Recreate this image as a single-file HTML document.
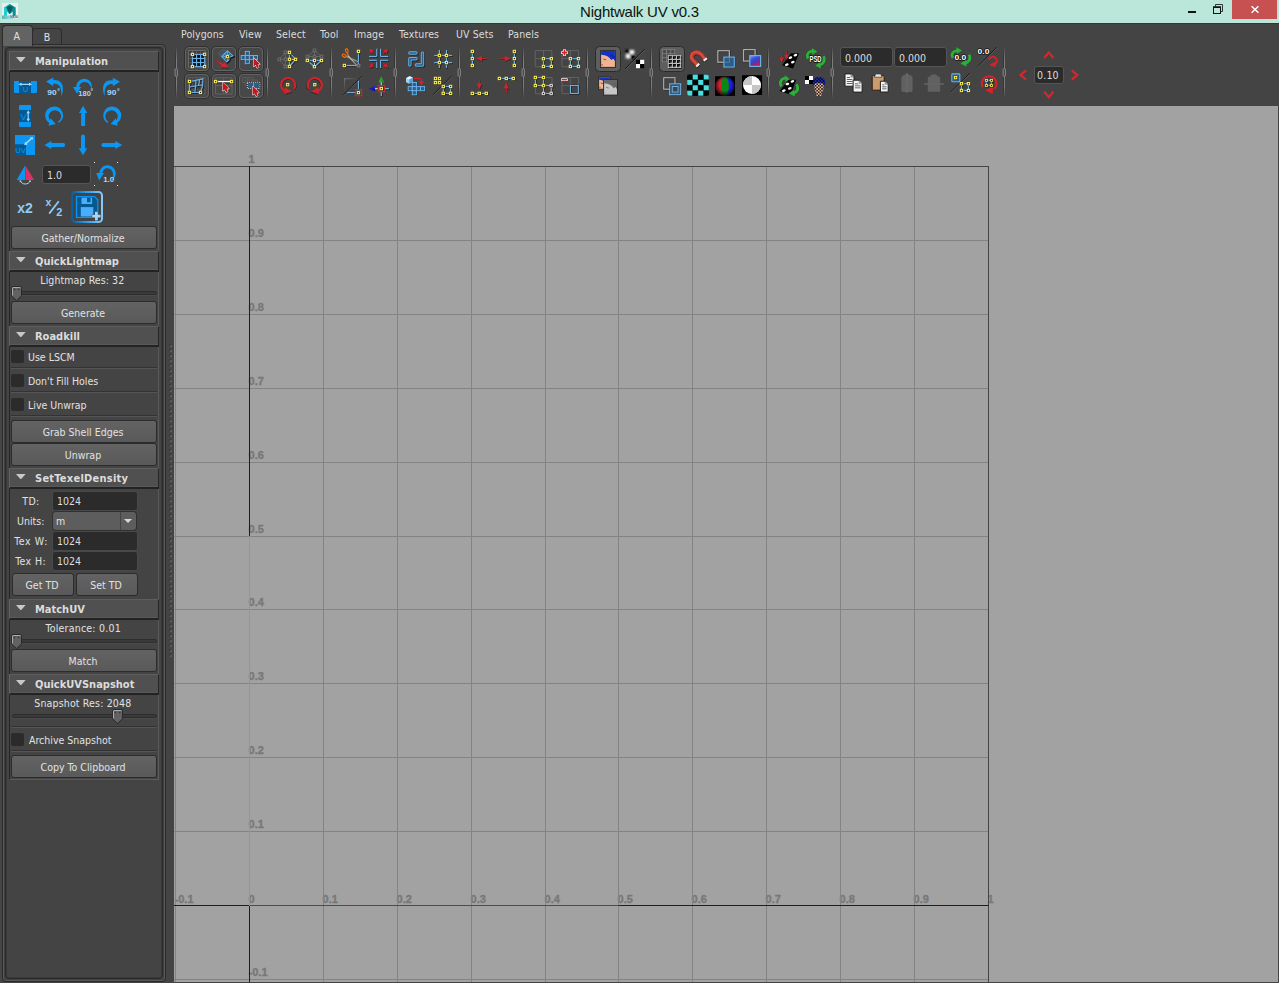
<!DOCTYPE html><html><head><meta charset="utf-8"><title>Nightwalk UV v0.3</title><style>
*{box-sizing:border-box;margin:0;padding:0}
html,body{width:1279px;height:983px;overflow:hidden;background:#444;}
body{position:relative;font-family:"DejaVu Sans Condensed","Liberation Sans",sans-serif;font-size:10.5px;color:#d8d8d8;}
.abs{position:absolute}
#title{position:absolute;left:0;top:0;width:1279px;height:23px;background:#bae7d9;}
#title .t{position:absolute;left:0;width:1279px;top:3px;text-align:center;font-family:'Liberation Sans',sans-serif;font-size:15px;color:#101010;line-height:18px;letter-spacing:-0.22px}
#close{position:absolute;left:1232px;top:0;width:45px;height:19px;background:#c75050}
.hdr{position:absolute;left:9px;width:150px;height:21px;background:#505050;border-top:1px solid #5e5e5e;border-left:1px solid #636363;border-right:1px solid #262626;border-bottom:2px solid #232323;box-shadow:inset 0 -1px 0 #595959}
.hdr b{position:absolute;left:25px;top:3px;font-family:"DejaVu Sans Condensed","Liberation Sans",sans-serif;font-weight:bold;font-size:11px;line-height:13px;color:#dcdcdc;white-space:nowrap}
.hdr i{position:absolute;left:6px;top:5px;width:9.6px;height:5.4px;background:#c8c8c8;clip-path:polygon(0 0,100% 0,50% 100%)}
.btn{position:absolute;height:21px;background:linear-gradient(#636363,#595959);border-radius:2.5px;box-shadow:0 0 0 1px #2c2c2c;text-align:center;line-height:21px;color:#e2e2e2;white-space:nowrap;padding:1px 2px 0 0}
.fld{position:absolute;background:#2b2b2b;border-radius:3px;border:1px solid #555;color:#dedede;white-space:nowrap}
.lbl{position:absolute;white-space:nowrap;color:#e2e2e2;line-height:13px}
.cb{position:absolute;left:11px;width:13px;height:13px;background:#2b2b2b;border-radius:2px}
.sep{position:absolute;left:11px;width:146px;height:2px;border-top:1px solid #333;border-bottom:1px solid #555}
.groove{position:absolute;left:12px;width:145px;height:4px;background:#3a3a3a;border:1px solid #2d2d2d;border-radius:2px;box-shadow:0 1px 0 #4b4b4b}
.knob{position:absolute;width:11px;height:15px}
.menu span{position:absolute;top:27px;line-height:14px;color:#dcdcdc;white-space:nowrap;letter-spacing:0.1px}
.tsep{position:absolute;top:47px;width:3px;height:51px}
.tbtn{position:absolute;width:24px;height:24px;border-radius:4px;background:#494949;box-shadow:0 0 0 1px #3a3a3a, inset 0 0 0 1px #555}
.tbtn.on{background:#5e5e5e;box-shadow:0 0 0 1px #3a3a3a}
svg{position:absolute;overflow:visible}
.gl{position:absolute;font-family:'Liberation Sans',sans-serif;font-weight:bold;font-size:10px;color:#7c7c7c;line-height:10px;white-space:nowrap}
</style></head><body><div id="title"><div class="t">Nightwalk UV v0.3</div><svg style="left:2px;top:3px" width="16" height="16" viewBox="0 0 16 16">
<defs><linearGradient id="mg" x1="0" y1="0" x2="1" y2="1"><stop offset="0" stop-color="#dfeeee"/><stop offset="1" stop-color="#f4f4f8"/></linearGradient>
<linearGradient id="mg2" x1="0" y1="0" x2="1" y2="0"><stop offset="0" stop-color="#4fb8bc"/><stop offset="1" stop-color="#e8f0f2"/></linearGradient></defs>
<rect width="16" height="16" fill="url(#mg)"/>
<rect y="12.5" width="16" height="3.5" fill="url(#mg2)"/>
<path d="M2 12.5V4.5L7.5 1L13.5 4.5V12.5H10.8V8.3L7.6 11.2L4.8 8.3V12.5Z" fill="#12b5b5"/>
<path d="M7.5 1L13.5 4.5V12.5H10.8V8.3L7.6 11.2Z" fill="#0c8f90"/>
<path d="M4.2 4.2L7.6 2.6L11.2 4.2L7.6 11Z" fill="#075f62"/>
<path d="M2 12.5V4.5L4.2 4.2L4.8 8.3V12.5Z" fill="#1ccfd0"/>
<text x="8.2" y="15.4" font-family="Liberation Sans,sans-serif" font-weight="bold" font-size="2.9" fill="#445" opacity="0.75">MAYA</text>
</svg><div class="abs" style="left:1188px;top:11px;width:8px;height:2px;background:#111"></div><svg style="left:1213px;top:4px" width="11" height="10" viewBox="0 0 11 10">
<path d="M2.5 2.5V0.5H9.5V7.5H8" fill="none" stroke="#333" stroke-width="1"/>
<rect x="0.5" y="3" width="7" height="6.5" fill="none" stroke="#111" stroke-width="1"/><rect x="0" y="2.5" width="8" height="1.5" fill="#111"/></svg><div id="close"><svg style="left:19px;top:6px" width="8" height="7" viewBox="0 0 8 7"><path d="M0.6 0.3L7.4 6.7M7.4 0.3L0.6 6.7" stroke="#fff" stroke-width="1.5"/></svg></div></div><div class="abs" style="left:0;top:23px;width:1279px;height:1px;background:#363636"></div><div class="abs" style="left:0;top:24px;width:2px;height:959px;background:#464646"></div><div class="abs" style="left:2px;top:44px;width:164px;height:938px;border:1px solid #2c2c2c;border-radius:4px;box-shadow:inset 0 0 0 1px #575757;background:#444"></div><div class="abs" style="left:5px;top:47px;width:158px;height:932px;border:1px solid #2a2a2a;border-radius:4px;box-shadow:0 0 0 1px #414141,inset 0 0 0 1px #393939;background:#444"></div><div class="abs" style="left:32px;top:28px;width:30px;height:16px;border:1px solid #2c2c2c;border-bottom:none;border-radius:4px 4px 0 0;background:#444"></div><div class="abs" style="left:2px;top:25px;width:31px;height:21px;border:1px solid #2c2c2c;border-bottom:none;border-radius:4px 4px 0 0;background:#636363"></div><div class="abs" style="left:3px;top:44px;width:29px;height:2px;background:#636363"></div><div class="lbl" style="left:13.6px;top:30px;">A</div><div class="lbl" style="left:43.8px;top:31px;">B</div><div class="abs" style="left:9px;top:51px;width:150px;height:729px;border-left:1px solid #262626;border-right:1px solid #5a5a5a;border-bottom:1px solid #5a5a5a"></div><div class="hdr" style="top:51px"><i></i><b style="">Manipulation</b></div><div class="hdr" style="top:251px"><i></i><b style="">QuickLightmap</b></div><div class="hdr" style="top:326px"><i></i><b style="">Roadkill</b></div><div class="hdr" style="top:468px"><i></i><b style="letter-spacing:0.25px">SetTexelDensity</b></div><div class="hdr" style="top:599px"><i></i><b style="">MatchUV</b></div><div class="hdr" style="top:674px"><i></i><b style="">QuickUVSnapshot</b></div><div class="fld" style="left:42px;top:165px;width:49px;height:19px;line-height:18px;padding-left:4px;">1.0</div><div class="btn" style="left:12px;top:227px;width:144px;height:21px;line-height:20px">Gather/Normalize</div><div class="lbl" style="left:7.3px;width:150px;text-align:center;top:274px;letter-spacing:0.09px">Lightmap Res: 32</div><div class="groove" style="top:291px"></div><svg class="knob" style="left:11px;top:286px" width="11" height="15" viewBox="0 0 11 15"><path d="M2 0.5H9Q10.5 0.5 10.5 2V9.8L5.5 14.6L0.5 9.8V2Q0.5 0.5 2 0.5Z" fill="#626262" stroke="#2a2a2a" stroke-width="1"/><path d="M1.5 9.4V2.2Q1.5 1.5 2.2 1.5H8.8Q9.5 1.5 9.5 2.2" fill="none" stroke="#b4b4b4" stroke-width="1" opacity="0.9"/><rect x="2.6" y="2.8" width="1.6" height="1.4" fill="#3a3a3a"/><rect x="6.9" y="2.8" width="1.6" height="1.4" fill="#3a3a3a"/></svg><div class="btn" style="left:12px;top:302px;width:144px;height:21px;line-height:20px">Generate</div><div class="cb" style="top:350px"></div><div class="lbl" style="left:28px;top:351px;">Use LSCM</div><div class="sep" style="top:367px"></div><div class="cb" style="top:374px"></div><div class="lbl" style="left:28px;top:375px;">Don't Fill Holes</div><div class="sep" style="top:391px"></div><div class="cb" style="top:398px"></div><div class="lbl" style="left:28px;top:399px;">Live Unwrap</div><div class="sep" style="top:415px"></div><div class="btn" style="left:12px;top:421px;width:144px;height:21px;line-height:20px">Grab Shell Edges</div><div class="btn" style="left:12px;top:444px;width:144px;height:21px;line-height:20px">Unwrap</div><div class="lbl" style="left:22.3px;top:495px;letter-spacing:0.35px">TD:</div><div class="fld" style="left:52px;top:491px;width:86px;height:20px;line-height:19px;padding-left:4px;border-color:#494949">1024</div><div class="lbl" style="left:17px;top:515px;">Units:</div><div class="abs" style="left:53px;top:512px;width:83px;height:18px;background:#5d5d5d;border-radius:3px;box-shadow:0 0 0 1px #303030"><span class="lbl" style="left:3px;top:3px">m</span><div class="abs" style="left:67px;top:0;width:1px;height:18px;background:#444"></div><div class="abs" style="left:71px;top:7px;border-left:4px solid transparent;border-right:4px solid transparent;border-top:4px solid #d8d8d8"></div></div><div class="lbl" style="left:14.2px;top:535px;letter-spacing:0.62px">Tex W:</div><div class="fld" style="left:52px;top:531px;width:86px;height:20px;line-height:19px;padding-left:4px;border-color:#494949">1024</div><div class="lbl" style="left:15.2px;top:555px;letter-spacing:0.4px">Tex H:</div><div class="fld" style="left:52px;top:551px;width:86px;height:20px;line-height:19px;padding-left:4px;border-color:#494949">1024</div><div class="btn" style="left:13px;top:574px;width:60px;height:21px;line-height:20px">Get TD</div><div class="btn" style="left:77px;top:574px;width:60px;height:21px;line-height:20px">Set TD</div><div class="lbl" style="left:8.2px;width:150px;text-align:center;top:622px;letter-spacing:0.22px">Tolerance: 0.01</div><div class="groove" style="top:639px"></div><svg class="knob" style="left:11px;top:634px" width="11" height="15" viewBox="0 0 11 15"><path d="M2 0.5H9Q10.5 0.5 10.5 2V9.8L5.5 14.6L0.5 9.8V2Q0.5 0.5 2 0.5Z" fill="#626262" stroke="#2a2a2a" stroke-width="1"/><path d="M1.5 9.4V2.2Q1.5 1.5 2.2 1.5H8.8Q9.5 1.5 9.5 2.2" fill="none" stroke="#b4b4b4" stroke-width="1" opacity="0.9"/><rect x="2.6" y="2.8" width="1.6" height="1.4" fill="#3a3a3a"/><rect x="6.9" y="2.8" width="1.6" height="1.4" fill="#3a3a3a"/></svg><div class="btn" style="left:12px;top:650px;width:144px;height:21px;line-height:20px">Match</div><div class="lbl" style="left:7.8px;width:150px;text-align:center;top:697px;letter-spacing:0.16px">Snapshot Res: 2048</div><div class="groove" style="top:714px"></div><svg class="knob" style="left:112px;top:709px" width="11" height="15" viewBox="0 0 11 15"><path d="M2 0.5H9Q10.5 0.5 10.5 2V9.8L5.5 14.6L0.5 9.8V2Q0.5 0.5 2 0.5Z" fill="#626262" stroke="#2a2a2a" stroke-width="1"/><path d="M1.5 9.4V2.2Q1.5 1.5 2.2 1.5H8.8Q9.5 1.5 9.5 2.2" fill="none" stroke="#b4b4b4" stroke-width="1" opacity="0.9"/><rect x="2.6" y="2.8" width="1.6" height="1.4" fill="#3a3a3a"/><rect x="6.9" y="2.8" width="1.6" height="1.4" fill="#3a3a3a"/></svg><div class="sep" style="top:726px"></div><div class="cb" style="top:733px"></div><div class="lbl" style="left:29px;top:734px;">Archive Snapshot</div><div class="sep" style="top:750px"></div><div class="btn" style="left:12px;top:756px;width:144px;height:21px;line-height:20px">Copy To Clipboard</div><svg style="left:0;top:0" width="170" height="260" viewBox="0 0 170 260"><rect x="14" y="81" width="23" height="12" rx="1" fill="#0b96f2"/><rect x="19" y="81" width="12" height="12" fill="#045a90"/><path d="M18.5 84.3L21.5 82.6V83.8H29V82.6L32 84.3L29 86V84.9H21.5V86Z" fill="#a6d6fa"/><text x="25.5" y="92" text-anchor="middle" font-family="Liberation Sans,sans-serif" font-size="7.5" fill="#0b96f2">U</text><path d="M46 81.5L53.3 77.6V80.2C59 79.5 63 83 63 88.5C63 91.5 62.3 94 61.2 96.2C61.6 92 61.2 88 59 85.6C57.5 84 55.5 83.6 53.3 83.8V86.2Z" fill="#0b96f2"/><text x="47.3" y="95.4" font-family="Liberation Sans,sans-serif" font-size="7.6" font-weight="bold" fill="#a6d6fa" textLength="9.4" lengthAdjust="spacingAndGlyphs">90</text><text x="57.2" y="94.2" font-family="Liberation Sans,sans-serif" font-size="6.5" font-weight="bold" fill="#a6d6fa">°</text><path d="M73 87H76.3C76.2 82.5 79.8 78.8 84.3 78.8C89 78.8 92.2 82.6 91.9 87.5C91.8 88.6 91.7 89.2 91.5 89.8C91 85.5 88.5 82 84.5 82C81.5 82 79.4 84.2 79.3 87H81.2L77 93.8Z" fill="#0b96f2"/><text x="78.3" y="96" font-family="Liberation Sans,sans-serif" font-size="7.6" font-weight="bold" fill="#a6d6fa" textLength="12.6" lengthAdjust="spacingAndGlyphs">180</text><text x="90.6" y="93.6" font-family="Liberation Sans,sans-serif" font-size="6.5" font-weight="bold" fill="#a6d6fa">°</text><path d="M120 81.7L112.8 77.8V80.4C107 79.5 103 83 103 88.5C103 91.5 103.7 94 104.8 96.2C104.4 92 104.8 88 107 85.7C108.5 84.2 110.5 83.8 112.8 84V86.3Z" fill="#0b96f2"/><text x="107" y="95.4" font-family="Liberation Sans,sans-serif" font-size="7.6" font-weight="bold" fill="#a6d6fa" textLength="9.4" lengthAdjust="spacingAndGlyphs">90</text><text x="116.9" y="94.2" font-family="Liberation Sans,sans-serif" font-size="6.5" font-weight="bold" fill="#a6d6fa">°</text><rect x="19" y="105" width="12" height="22" rx="1" fill="#0b96f2"/><rect x="19" y="110" width="12" height="12" fill="#045a90"/><text x="23.4" y="120.3" text-anchor="middle" font-family="Liberation Sans,sans-serif" font-size="9" fill="#0b96f2">V</text><path d="M28.2 110.2L30 113.2H28.8V118.8H30L28.2 121.8L26.4 118.8H27.6V113.2H26.4Z" fill="#a6d6fa"/><path d="M49.04 122.77A9 9 0 1 1 58.97 123.03L58.00 121.77A6.2 6.2 0 1 0 51.34 121.48ZM50.6 118.30000000000001L55.800000000000004 123.9L48.5 125.7Z" fill="#0b96f2"/><path d="M83.1 105.8L87.3 113.0H85.1V126.1H81.1V113.0H78.89999999999999Z" fill="#0b96f2"/><g transform="translate(224.4,0) scale(-1,1)"><path d="M107.04 122.77A9 9 0 1 1 116.97 123.03L116.00 121.77A6.2 6.2 0 1 0 109.34 121.48ZM108.60000000000001 118.30000000000001L113.8 123.9L106.5 125.7Z" fill="#0b96f2"/></g><rect x="15" y="135" width="20" height="20" fill="#0b96f2"/><rect x="15" y="144.3" width="11" height="10.7" fill="#045a90"/><text x="15.3" y="152.6" font-family="Liberation Sans,sans-serif" font-size="7.4" fill="#0b96f2" textLength="10.4" lengthAdjust="spacingAndGlyphs">UV</text><path d="M24.2 145.3L25 141.8L25.8 142.6L30.6 138.2L29.8 137.4L33.1 136.9L32.5 140.2L31.7 139.3L26.9 143.7L27.7 144.6Z" fill="#a6d6fa"/><path d="M44.4 145L51.4 141V143H63.099999999999994A2 2 0 0 1 63.099999999999994 147H51.4V149Z" fill="#0b96f2"/><path d="M83 155.3L87.2 148.3H85V136.4A2 2 0 0 0 81 136.4V148.3H78.8Z" fill="#0b96f2"/><path d="M122.3 145L115.3 141V143H103.4A2 2 0 0 0 103.4 147H115.3V149Z" fill="#0b96f2"/><path d="M16.6 179.9L25 165.6V179.9Z" fill="#0b96f2"/><path d="M25.4 165.6L34.2 179.9H25.4Z" fill="#dc3263"/><path d="M20.4 180.8C21 183 23 184 25.2 184C27.6 184 29.4 183 30 180.8" fill="none" stroke="#a6d6fa" stroke-width="1"/><path d="M19.6 180.4h1.6v1.6h-1.6zM29.2 180.4h1.6v1.6h-1.6z" fill="#a6d6fa"/><rect x="94" y="162" width="1" height="1" fill="#e6e6e6"/><rect x="117" y="162" width="1" height="1" fill="#e6e6e6"/><rect x="94" y="185" width="1" height="1" fill="#e6e6e6"/><rect x="117" y="185" width="1" height="1" fill="#e6e6e6"/><path d="M96.2 173H99.4C99.6 168.6 103.2 165.2 107.6 165.2C112.2 165.2 115.7 168.9 115.7 173.4C115.7 176.5 114 179.4 111.5 180.8C112.5 179 113 176.8 113 174.5C113 171 110.8 168.2 107.5 168.2C104.8 168.2 102.6 170.3 102.4 173H104L99.2 180.6Z" fill="#0b96f2"/><text x="103.2" y="182.3" font-family="Liberation Sans,sans-serif" font-size="7.2" font-weight="bold" fill="#a6d6fa" textLength="11" lengthAdjust="spacingAndGlyphs">1.0</text><text x="17.3" y="212.6" font-family="Liberation Sans,sans-serif" font-size="14" font-weight="bold" fill="#8ecbf9" textLength="15.6" lengthAdjust="spacingAndGlyphs">x2</text><text x="45.6" y="205.6" font-family="Liberation Sans,sans-serif" font-size="10.5" font-weight="bold" fill="#8ecbf9">x</text><path d="M49.2 213.6L58.8 201.2" stroke="#8ecbf9" stroke-width="1.8"/><text x="56.3" y="216.1" font-family="Liberation Sans,sans-serif" font-size="11" font-weight="bold" fill="#8ecbf9">2</text><defs><linearGradient id="sg" x1="0" y1="0" x2="1" y2="0"><stop offset="0" stop-color="#05609e"/><stop offset="0.45" stop-color="#2a98ee"/><stop offset="1" stop-color="#86c8ff"/></linearGradient></defs><rect x="72" y="192" width="30" height="30" rx="3.5" fill="none" stroke="url(#sg)" stroke-width="2"/><path d="M76.5 196.5H94.5L97.8 199.8V217.5H76.5Z" fill="#045a90" stroke="#0b96f2" stroke-width="1.2"/><rect x="81.5" y="197.6" width="10.6" height="6.4" fill="#4aaefc"/><rect x="87" y="197.6" width="3.5" height="4.6" fill="#045a90"/><rect x="80.8" y="207.1" width="12.5" height="9.4" fill="#4aaefc"/><path d="M95 211.8H97.8V214.7H100.6V217.5H97.8V220.4H95V217.5H92.2V214.7H95Z" fill="#a0d4ff" stroke="#3a3a3a" stroke-width="0.8" paint-order="stroke"/></svg><div class="menu"><span style="left:181px">Polygons</span><span style="left:239px">View</span><span style="left:276px">Select</span><span style="left:320px">Tool</span><span style="left:354px">Image</span><span style="left:399px">Textures</span><span style="left:456px">UV Sets</span><span style="left:508px">Panels</span></div><svg style="left:170px;top:44px" width="930" height="60" viewBox="170 44 930 60"><defs><linearGradient id="sepl" x1="0" y1="0" x2="0" y2="1"><stop offset="0" stop-color="#777" stop-opacity="0.1"/><stop offset="0.25" stop-color="#7c7c7c"/><stop offset="0.75" stop-color="#7c7c7c"/><stop offset="1" stop-color="#777" stop-opacity="0.1"/></linearGradient><linearGradient id="sepd" x1="0" y1="0" x2="0" y2="1"><stop offset="0" stop-color="#333" stop-opacity="0.1"/><stop offset="0.25" stop-color="#353535"/><stop offset="0.75" stop-color="#353535"/><stop offset="1" stop-color="#333" stop-opacity="0.1"/></linearGradient></defs><rect x="175" y="47" width="1" height="51" fill="url(#sepd)"/><rect x="176" y="47" width="1" height="51" fill="url(#sepl)"/><rect x="175.1" y="68.5" width="2.3" height="8" rx="1.15" fill="#444" stroke="#9c9c9c" stroke-width="0.8"/><rect x="266" y="47" width="1" height="51" fill="url(#sepd)"/><rect x="267" y="47" width="1" height="51" fill="url(#sepl)"/><rect x="266.1" y="68.5" width="2.3" height="8" rx="1.15" fill="#444" stroke="#9c9c9c" stroke-width="0.8"/><rect x="330" y="47" width="1" height="51" fill="url(#sepd)"/><rect x="331" y="47" width="1" height="51" fill="url(#sepl)"/><rect x="330.1" y="68.5" width="2.3" height="8" rx="1.15" fill="#444" stroke="#9c9c9c" stroke-width="0.8"/><rect x="394" y="47" width="1" height="51" fill="url(#sepd)"/><rect x="395" y="47" width="1" height="51" fill="url(#sepl)"/><rect x="394.1" y="68.5" width="2.3" height="8" rx="1.15" fill="#444" stroke="#9c9c9c" stroke-width="0.8"/><rect x="458" y="47" width="1" height="51" fill="url(#sepd)"/><rect x="459" y="47" width="1" height="51" fill="url(#sepl)"/><rect x="458.1" y="68.5" width="2.3" height="8" rx="1.15" fill="#444" stroke="#9c9c9c" stroke-width="0.8"/><rect x="522" y="47" width="1" height="51" fill="url(#sepd)"/><rect x="523" y="47" width="1" height="51" fill="url(#sepl)"/><rect x="522.1" y="68.5" width="2.3" height="8" rx="1.15" fill="#444" stroke="#9c9c9c" stroke-width="0.8"/><rect x="586" y="47" width="1" height="51" fill="url(#sepd)"/><rect x="587" y="47" width="1" height="51" fill="url(#sepl)"/><rect x="586.1" y="68.5" width="2.3" height="8" rx="1.15" fill="#444" stroke="#9c9c9c" stroke-width="0.8"/><rect x="650" y="47" width="1" height="51" fill="url(#sepd)"/><rect x="651" y="47" width="1" height="51" fill="url(#sepl)"/><rect x="650.1" y="68.5" width="2.3" height="8" rx="1.15" fill="#444" stroke="#9c9c9c" stroke-width="0.8"/><rect x="767" y="47" width="1" height="51" fill="url(#sepd)"/><rect x="768" y="47" width="1" height="51" fill="url(#sepl)"/><rect x="767.1" y="68.5" width="2.3" height="8" rx="1.15" fill="#444" stroke="#9c9c9c" stroke-width="0.8"/><rect x="831" y="47" width="1" height="51" fill="url(#sepd)"/><rect x="832" y="47" width="1" height="51" fill="url(#sepl)"/><rect x="831.1" y="68.5" width="2.3" height="8" rx="1.15" fill="#444" stroke="#9c9c9c" stroke-width="0.8"/><rect x="1003" y="47" width="1" height="51" fill="url(#sepd)"/><rect x="1004" y="47" width="1" height="51" fill="url(#sepl)"/><rect x="1003.1" y="68.5" width="2.3" height="8" rx="1.15" fill="#444" stroke="#9c9c9c" stroke-width="0.8"/><rect x="184.5" y="46.5" width="25" height="25" rx="4.5" fill="#484848" stroke="#303030" stroke-width="1"/><rect x="185.5" y="47.5" width="23" height="23" rx="3.5" fill="none" stroke="#626262" stroke-width="1"/><rect x="184.5" y="73.5" width="25" height="25" rx="4.5" fill="#484848" stroke="#303030" stroke-width="1"/><rect x="185.5" y="74.5" width="23" height="23" rx="3.5" fill="none" stroke="#626262" stroke-width="1"/><rect x="211.5" y="46.5" width="25" height="25" rx="4.5" fill="#484848" stroke="#303030" stroke-width="1"/><rect x="212.5" y="47.5" width="23" height="23" rx="3.5" fill="none" stroke="#626262" stroke-width="1"/><rect x="211.5" y="73.5" width="25" height="25" rx="4.5" fill="#484848" stroke="#303030" stroke-width="1"/><rect x="212.5" y="74.5" width="23" height="23" rx="3.5" fill="none" stroke="#626262" stroke-width="1"/><rect x="238.5" y="46.5" width="25" height="25" rx="4.5" fill="#484848" stroke="#303030" stroke-width="1"/><rect x="239.5" y="47.5" width="23" height="23" rx="3.5" fill="none" stroke="#626262" stroke-width="1"/><rect x="238.5" y="73.5" width="25" height="25" rx="4.5" fill="#484848" stroke="#303030" stroke-width="1"/><rect x="239.5" y="74.5" width="23" height="23" rx="3.5" fill="none" stroke="#626262" stroke-width="1"/><rect x="188.0" y="50" width="1" height="17.4" fill="#686868"/><rect x="188" y="50.0" width="17.4" height="1" fill="#686868"/><rect x="192.1" y="50" width="1" height="17.4" fill="#686868"/><rect x="188" y="54.1" width="17.4" height="1" fill="#686868"/><rect x="196.2" y="50" width="1" height="17.4" fill="#686868"/><rect x="188" y="58.2" width="17.4" height="1" fill="#686868"/><rect x="200.3" y="50" width="1" height="17.4" fill="#686868"/><rect x="188" y="62.3" width="17.4" height="1" fill="#686868"/><rect x="204.4" y="50" width="1" height="17.4" fill="#686868"/><rect x="188" y="66.4" width="17.4" height="1" fill="#686868"/><rect x="189.0" y="51.0" width="3.1" height="3.1" fill="#3a3a3a"/><rect x="189.0" y="55.1" width="3.1" height="3.1" fill="#3a3a3a"/><rect x="189.0" y="59.2" width="3.1" height="3.1" fill="#3a3a3a"/><rect x="189.0" y="63.3" width="3.1" height="3.1" fill="#3a3a3a"/><rect x="193.1" y="51.0" width="3.1" height="3.1" fill="#3a3a3a"/><rect x="193.1" y="55.1" width="3.1" height="3.1" fill="#3a3a3a"/><rect x="193.1" y="59.2" width="3.1" height="3.1" fill="#3a3a3a"/><rect x="193.1" y="63.3" width="3.1" height="3.1" fill="#3a3a3a"/><rect x="197.2" y="51.0" width="3.1" height="3.1" fill="#3a3a3a"/><rect x="197.2" y="55.1" width="3.1" height="3.1" fill="#3a3a3a"/><rect x="197.2" y="59.2" width="3.1" height="3.1" fill="#3a3a3a"/><rect x="197.2" y="63.3" width="3.1" height="3.1" fill="#3a3a3a"/><rect x="201.3" y="51.0" width="3.1" height="3.1" fill="#3a3a3a"/><rect x="201.3" y="55.1" width="3.1" height="3.1" fill="#3a3a3a"/><rect x="201.3" y="59.2" width="3.1" height="3.1" fill="#3a3a3a"/><rect x="201.3" y="63.3" width="3.1" height="3.1" fill="#3a3a3a"/><rect x="192.5" y="54.4" width="12.2" height="12.2" fill="#111"/><rect x="191.90" y="54.4" width="1.15" height="12.2" fill="#6bb0e4"/><rect x="192.5" y="53.80" width="12.2" height="1.15" fill="#6bb0e4"/><rect x="195.97" y="54.4" width="1.15" height="12.2" fill="#6bb0e4"/><rect x="192.5" y="57.87" width="12.2" height="1.15" fill="#6bb0e4"/><rect x="200.04" y="54.4" width="1.15" height="12.2" fill="#6bb0e4"/><rect x="192.5" y="61.94" width="12.2" height="1.15" fill="#6bb0e4"/><rect x="204.11" y="54.4" width="1.15" height="12.2" fill="#6bb0e4"/><rect x="192.5" y="66.01" width="12.2" height="1.15" fill="#6bb0e4"/><rect x="191.20" y="53.10" width="3.6" height="3.6" fill="#1a1a1a" opacity="0.8"/><rect x="190.80" y="52.70" width="3.4" height="3.4" fill="#f4e850"/><rect x="191.95" y="53.85" width="1.1" height="1.1" fill="#1a1a1a"/><rect x="203.30" y="53.10" width="3.6" height="3.6" fill="#1a1a1a" opacity="0.8"/><rect x="202.90" y="52.70" width="3.4" height="3.4" fill="#f4e850"/><rect x="204.05" y="53.85" width="1.1" height="1.1" fill="#1a1a1a"/><rect x="191.20" y="65.30" width="3.6" height="3.6" fill="#1a1a1a" opacity="0.8"/><rect x="190.80" y="64.90" width="3.4" height="3.4" fill="#f4e850"/><rect x="191.95" y="66.05" width="1.1" height="1.1" fill="#1a1a1a"/><rect x="203.30" y="65.30" width="3.6" height="3.6" fill="#1a1a1a" opacity="0.8"/><rect x="202.90" y="64.90" width="3.4" height="3.4" fill="#f4e850"/><rect x="204.05" y="66.05" width="1.1" height="1.1" fill="#1a1a1a"/><path d="M218.3 53.6L223 49.4L226 50.6M219.8 55L224.6 50.4M221 56.2L225.8 51.4M218.3 53.6L221.4 56.8" fill="none" stroke="#3f6688" stroke-width="0.9"/><path d="M221.8 56.6L227.5 50.9L233.2 55.8L229.2 57.4L228.8 60L226.6 62Z" fill="#0c0c0c" stroke="#0c0c0c" stroke-width="1.6" stroke-linejoin="round" opacity="0.85" transform="translate(0.9,0.9)"/><path d="M221.8 56.6L227.5 50.9L233.2 55.8L229.2 57.4L228.8 60L226.6 62Z" fill="#2b5d88" stroke="#6bb0e4" stroke-width="1.1" stroke-linejoin="round"/><path d="M227.5 50.9V61.4M221.8 56.6H229.4M224.6 53.8L229 58.6M230.4 53.4L224.2 59.4" stroke="#6bb0e4" stroke-width="0.8"/><rect x="226.20" y="55.30" width="3.6" height="3.6" fill="#1a1a1a" opacity="0.8"/><rect x="225.80" y="54.90" width="3.4" height="3.4" fill="#f4e850"/><rect x="226.95" y="56.05" width="1.1" height="1.1" fill="#1a1a1a"/><path d="M214.2 59.2L223.2 63.7L224.4 62.3L229 67.8L220.4 67.3L221.7 65.7Z" fill="#151515" opacity="0.55" transform="translate(0.6,0.9)"/><path d="M214.2 59.2L223.2 63.7L224.4 62.3L229 67.8L220.4 67.3L221.7 65.7Z" fill="#d42430"/><rect x="246.2" y="52.3" width="4.1" height="4.1" fill="#151515" opacity="0.7"/><rect x="242.1" y="56.4" width="4.1" height="4.1" fill="#151515" opacity="0.7"/><rect x="246.2" y="56.4" width="4.1" height="4.1" fill="#151515" opacity="0.7"/><rect x="250.29999999999998" y="56.4" width="4.1" height="4.1" fill="#151515" opacity="0.7"/><rect x="254.4" y="56.4" width="4.1" height="4.1" fill="#151515" opacity="0.7"/><rect x="246.2" y="60.49999999999999" width="4.1" height="4.1" fill="#151515" opacity="0.7"/><rect x="245.29999999999998" y="51.4" width="4.1" height="4.1" fill="#2b5d88" stroke="#6bb0e4" stroke-width="1"/><rect x="241.2" y="55.5" width="4.1" height="4.1" fill="#2b5d88" stroke="#6bb0e4" stroke-width="1"/><rect x="245.29999999999998" y="55.5" width="4.1" height="4.1" fill="#2b5d88" stroke="#6bb0e4" stroke-width="1"/><rect x="249.39999999999998" y="55.5" width="4.1" height="4.1" fill="#2b5d88" stroke="#6bb0e4" stroke-width="1"/><rect x="253.5" y="55.5" width="4.1" height="4.1" fill="#2b5d88" stroke="#6bb0e4" stroke-width="1"/><rect x="245.29999999999998" y="59.599999999999994" width="4.1" height="4.1" fill="#2b5d88" stroke="#6bb0e4" stroke-width="1"/><path d="M253.80 58.20L253.80 66.37L255.70 64.75L257.22 67.89L258.74 67.13L257.31 64.19L259.88 64.19Z" fill="#c4161e" stroke="#fff" stroke-width="1.1" stroke-linejoin="round" paint-order="stroke"/><path d="M253.80 58.20L253.80 66.37L255.70 64.75L257.22 67.89L258.74 67.13L257.31 64.19L259.88 64.19Z" fill="#c4161e"/><rect x="188.4" y="77.4" width="1" height="16.6" fill="#606060"/><rect x="188.4" y="77.4" width="16.6" height="1" fill="#606060"/><rect x="192.4" y="77.4" width="1" height="16.6" fill="#606060"/><rect x="188.4" y="81.4" width="16.6" height="1" fill="#606060"/><rect x="196.4" y="77.4" width="1" height="16.6" fill="#606060"/><rect x="188.4" y="85.4" width="16.6" height="1" fill="#606060"/><rect x="200.4" y="77.4" width="1" height="16.6" fill="#606060"/><rect x="188.4" y="89.4" width="16.6" height="1" fill="#606060"/><rect x="204.4" y="77.4" width="1" height="16.6" fill="#606060"/><rect x="188.4" y="93.4" width="16.6" height="1" fill="#606060"/><rect x="189.4" y="78.4" width="3" height="3" fill="#3d3d3d"/><rect x="189.4" y="82.4" width="3" height="3" fill="#3d3d3d"/><rect x="189.4" y="86.4" width="3" height="3" fill="#3d3d3d"/><rect x="189.4" y="90.4" width="3" height="3" fill="#3d3d3d"/><rect x="193.4" y="78.4" width="3" height="3" fill="#3d3d3d"/><rect x="193.4" y="82.4" width="3" height="3" fill="#3d3d3d"/><rect x="193.4" y="86.4" width="3" height="3" fill="#3d3d3d"/><rect x="193.4" y="90.4" width="3" height="3" fill="#3d3d3d"/><rect x="197.4" y="78.4" width="3" height="3" fill="#3d3d3d"/><rect x="197.4" y="82.4" width="3" height="3" fill="#3d3d3d"/><rect x="197.4" y="86.4" width="3" height="3" fill="#3d3d3d"/><rect x="197.4" y="90.4" width="3" height="3" fill="#3d3d3d"/><rect x="201.4" y="78.4" width="3" height="3" fill="#3d3d3d"/><rect x="201.4" y="82.4" width="3" height="3" fill="#3d3d3d"/><rect x="201.4" y="86.4" width="3" height="3" fill="#3d3d3d"/><rect x="201.4" y="90.4" width="3" height="3" fill="#3d3d3d"/><path d="M189.5 81.6L203 78.8C203.3 84 202.5 88 200.5 92.5H189.5ZM196 80.3C196 85 195.2 89 194.8 92.5M189.5 87C194 86.4 198 85.6 202.4 84.8M199.6 79.6C199.4 82 199 84 198.4 85.6" fill="none" stroke="#151515" stroke-width="1.4" opacity="0.7" transform="translate(0.8,0.8)"/><path d="M189.5 81.6L203 78.8C203.3 84 202.5 88 200.5 92.5H189.5ZM196 80.3C196 85 195.2 89 194.8 92.5M189.5 87C194 86.4 198 85.6 202.4 84.8M199.6 79.6C199.4 82 199 84 198.4 85.6" fill="none" stroke="#6bb0e4" stroke-width="1.2"/><rect x="188.20" y="80.20" width="3.6" height="3.6" fill="#1a1a1a" opacity="0.8"/><rect x="187.80" y="79.80" width="3.4" height="3.4" fill="#f4e850"/><rect x="188.95" y="80.95" width="1.1" height="1.1" fill="#1a1a1a"/><rect x="188.20" y="91.20" width="3.6" height="3.6" fill="#1a1a1a" opacity="0.8"/><rect x="187.80" y="90.80" width="3.4" height="3.4" fill="#f4e850"/><rect x="188.95" y="91.95" width="1.1" height="1.1" fill="#1a1a1a"/><rect x="199.20" y="91.20" width="3.6" height="3.6" fill="#1a1a1a" opacity="0.8"/><rect x="198.80" y="90.80" width="3.4" height="3.4" fill="#f4e850"/><rect x="199.95" y="91.95" width="1.1" height="1.1" fill="#1a1a1a"/><path d="M215.5 77.9H232V94H215.5ZM223.7 77.9V94M215.5 85.6H232" fill="none" stroke="#626262" stroke-width="1"/><path d="M216 82.4H232" stroke="#181818" stroke-width="1.4"/><path d="M216 81.6H232" stroke="#fff" stroke-width="1.4"/><rect x="214.30" y="80.30" width="3.6" height="3.6" fill="#1a1a1a" opacity="0.8"/><rect x="213.90" y="79.90" width="3.4" height="3.4" fill="#f4e850"/><rect x="215.05" y="81.05" width="1.1" height="1.1" fill="#1a1a1a"/><rect x="230.30" y="80.30" width="3.6" height="3.6" fill="#1a1a1a" opacity="0.8"/><rect x="229.90" y="79.90" width="3.4" height="3.4" fill="#f4e850"/><rect x="231.05" y="81.05" width="1.1" height="1.1" fill="#1a1a1a"/><path d="M222.80 82.60L222.80 90.77L224.70 89.16L226.22 92.29L227.74 91.53L226.31 88.58L228.88 88.58Z" fill="#c4161e" stroke="#fff" stroke-width="1.1" stroke-linejoin="round" paint-order="stroke"/><path d="M222.80 82.60L222.80 90.77L224.70 89.16L226.22 92.29L227.74 91.53L226.31 88.58L228.88 88.58Z" fill="#c4161e"/><path d="M242.5 77.4H253V82.5H242.5ZM247.8 77.4V82.5M245 80H257.5V85.5H245Z" fill="none" stroke="#5c5c5c" stroke-width="0.9"/><rect x="247.3" y="82.3" width="12.6" height="6.2" fill="#2b5d88"/><path d="M253.6 82.3V88.5" stroke="#6bb0e4" stroke-width="0.8"/><rect x="247.3" y="82.3" width="12.6" height="6.2" fill="none" stroke="#111" stroke-width="1"/><rect x="247.3" y="82.3" width="12.6" height="6.2" fill="none" stroke="#fff" stroke-width="1" stroke-dasharray="1 1"/><path d="M252.80 86.60L252.80 94.77L254.70 93.16L256.22 96.29L257.74 95.53L256.31 92.58L258.88 92.58Z" fill="#c4161e" stroke="#fff" stroke-width="1.1" stroke-linejoin="round" paint-order="stroke"/><path d="M252.80 86.60L252.80 94.77L254.70 93.16L256.22 96.29L257.74 95.53L256.31 92.58L258.88 92.58Z" fill="#c4161e"/><path d="M285.4 52.4V66.5M279.3 59.4H285.4M279.3 59.4L285.4 52.4M279.3 59.4L285.4 66.5" stroke="#6a6a6a" stroke-width="0.9" fill="none"/><rect x="284.05" y="51.05" width="2.7" height="2.7" fill="#444" stroke="#747474" stroke-width="0.8"/><rect x="277.95" y="58.05" width="2.7" height="2.7" fill="#444" stroke="#747474" stroke-width="0.8"/><rect x="284.05" y="58.05" width="2.7" height="2.7" fill="#444" stroke="#747474" stroke-width="0.8"/><rect x="284.05" y="65.15" width="2.7" height="2.7" fill="#444" stroke="#747474" stroke-width="0.8"/><path d="M290.2 53.1L290.2 67.2" stroke="#1c1c1c" stroke-width="1.6" opacity="0.8"/><path d="M289.5 52.4L289.5 66.5" stroke="#6bb0e4" stroke-width="1.2"/><path d="M290.2 53.1L296.3 60.1" stroke="#1c1c1c" stroke-width="1.6" opacity="0.8"/><path d="M289.5 52.4L295.6 59.4" stroke="#6bb0e4" stroke-width="1.2"/><path d="M290.2 67.2L296.3 60.1" stroke="#1c1c1c" stroke-width="1.6" opacity="0.8"/><path d="M289.5 66.5L295.6 59.4" stroke="#6bb0e4" stroke-width="1.2"/><path d="M290.2 60.1L296.3 60.1" stroke="#1c1c1c" stroke-width="1.4" opacity="0.8"/><path d="M289.5 59.4L295.6 59.4" stroke="#ccc" stroke-width="1.0"/><rect x="288.20" y="51.10" width="3.6" height="3.6" fill="#1a1a1a" opacity="0.8"/><rect x="287.80" y="50.70" width="3.4" height="3.4" fill="#f4e850"/><rect x="288.95" y="51.85" width="1.1" height="1.1" fill="#1a1a1a"/><rect x="288.20" y="58.10" width="3.6" height="3.6" fill="#1a1a1a" opacity="0.8"/><rect x="287.80" y="57.70" width="3.4" height="3.4" fill="#f4e850"/><rect x="288.95" y="58.85" width="1.1" height="1.1" fill="#1a1a1a"/><rect x="294.30" y="58.10" width="3.6" height="3.6" fill="#1a1a1a" opacity="0.8"/><rect x="293.90" y="57.70" width="3.4" height="3.4" fill="#f4e850"/><rect x="295.05" y="58.85" width="1.1" height="1.1" fill="#1a1a1a"/><rect x="288.20" y="65.20" width="3.6" height="3.6" fill="#1a1a1a" opacity="0.8"/><rect x="287.80" y="64.80" width="3.4" height="3.4" fill="#f4e850"/><rect x="288.95" y="65.95" width="1.1" height="1.1" fill="#1a1a1a"/><path d="M307.4 56.5H321.5M314.5 50.4V56.5M314.5 50.4L307.4 56.5M314.5 50.4L321.5 56.5" stroke="#6a6a6a" stroke-width="0.9" fill="none"/><rect x="313.15" y="49.05" width="2.7" height="2.7" fill="#444" stroke="#747474" stroke-width="0.8"/><rect x="306.05" y="55.15" width="2.7" height="2.7" fill="#444" stroke="#747474" stroke-width="0.8"/><rect x="313.15" y="55.15" width="2.7" height="2.7" fill="#444" stroke="#747474" stroke-width="0.8"/><rect x="320.15" y="55.15" width="2.7" height="2.7" fill="#444" stroke="#747474" stroke-width="0.8"/><path d="M308.09999999999997 61.2L322.2 61.2" stroke="#1c1c1c" stroke-width="1.6" opacity="0.8"/><path d="M307.4 60.5L321.5 60.5" stroke="#6bb0e4" stroke-width="1.2"/><path d="M308.09999999999997 61.2L315.2 67.4" stroke="#1c1c1c" stroke-width="1.6" opacity="0.8"/><path d="M307.4 60.5L314.5 66.7" stroke="#6bb0e4" stroke-width="1.2"/><path d="M322.2 61.2L315.2 67.4" stroke="#1c1c1c" stroke-width="1.6" opacity="0.8"/><path d="M321.5 60.5L314.5 66.7" stroke="#6bb0e4" stroke-width="1.2"/><path d="M315.2 61.2L315.2 67.4" stroke="#1c1c1c" stroke-width="1.4" opacity="0.8"/><path d="M314.5 60.5L314.5 66.7" stroke="#ccc" stroke-width="1.0"/><rect x="306.10" y="59.20" width="3.6" height="3.6" fill="#1a1a1a" opacity="0.8"/><rect x="305.70" y="58.80" width="3.4" height="3.4" fill="#f4e850"/><rect x="306.85" y="59.95" width="1.1" height="1.1" fill="#1a1a1a"/><rect x="313.20" y="59.20" width="3.6" height="3.6" fill="#1a1a1a" opacity="0.8"/><rect x="312.80" y="58.80" width="3.4" height="3.4" fill="#f4e850"/><rect x="313.95" y="59.95" width="1.1" height="1.1" fill="#1a1a1a"/><rect x="320.20" y="59.20" width="3.6" height="3.6" fill="#1a1a1a" opacity="0.8"/><rect x="319.80" y="58.80" width="3.4" height="3.4" fill="#f4e850"/><rect x="320.95" y="59.95" width="1.1" height="1.1" fill="#1a1a1a"/><rect x="313.20" y="65.40" width="3.6" height="3.6" fill="#1a1a1a" opacity="0.8"/><rect x="312.80" y="65.00" width="3.4" height="3.4" fill="#f4e850"/><rect x="313.95" y="66.15" width="1.1" height="1.1" fill="#1a1a1a"/><g transform="translate(0.6,0.8)" opacity="0.45"><path d="M284.29999999999995 90.8A7 7 0 1 1 294.4 88.10000000000001" fill="none" stroke="#111" stroke-width="2.1" stroke-linecap="round"/><path d="M284.7 87.3L292.09999999999997 91.60000000000001L284.0 94.3Z" fill="#111"/></g><path d="M284.29999999999995 90.8A7 7 0 1 1 294.4 88.10000000000001" fill="none" stroke="#d2232b" stroke-width="2.1" stroke-linecap="round"/><path d="M284.7 87.3L292.09999999999997 91.60000000000001L284.0 94.3Z" fill="#d2232b"/><rect x="286.40" y="83.40" width="3.6" height="3.6" fill="#1a1a1a" opacity="0.8"/><rect x="286.00" y="83.00" width="3.4" height="3.4" fill="#f4e850"/><rect x="287.15" y="84.15" width="1.1" height="1.1" fill="#1a1a1a"/><g transform="translate(630,0) scale(-1,1)"><g transform="translate(0.6,0.8)" opacity="0.45"><path d="M311.4 90.8A7 7 0 1 1 321.5 88.10000000000001" fill="none" stroke="#111" stroke-width="2.1" stroke-linecap="round"/><path d="M311.8 87.3L319.2 91.60000000000001L311.1 94.3Z" fill="#111"/></g><path d="M311.4 90.8A7 7 0 1 1 321.5 88.10000000000001" fill="none" stroke="#d2232b" stroke-width="2.1" stroke-linecap="round"/><path d="M311.8 87.3L319.2 91.60000000000001L311.1 94.3Z" fill="#d2232b"/></g><rect x="313.50" y="83.40" width="3.6" height="3.6" fill="#1a1a1a" opacity="0.8"/><rect x="313.10" y="83.00" width="3.4" height="3.4" fill="#f4e850"/><rect x="314.25" y="84.15" width="1.1" height="1.1" fill="#1a1a1a"/><path d="M359.2 52.1L359.2 66.2" stroke="#1c1c1c" stroke-width="1.6" opacity="0.8"/><path d="M358.5 51.4L358.5 65.5" stroke="#6bb0e4" stroke-width="1.2"/><path d="M345.09999999999997 66.2L359.2 66.2" stroke="#1c1c1c" stroke-width="1.6" opacity="0.8"/><path d="M344.4 65.5L358.5 65.5" stroke="#6bb0e4" stroke-width="1.2"/><rect x="357.20" y="50.10" width="3.6" height="3.6" fill="#1a1a1a" opacity="0.8"/><rect x="356.80" y="49.70" width="3.4" height="3.4" fill="#f4e850"/><rect x="357.95" y="50.85" width="1.1" height="1.1" fill="#1a1a1a"/><rect x="343.10" y="64.20" width="3.6" height="3.6" fill="#1a1a1a" opacity="0.8"/><rect x="342.70" y="63.80" width="3.4" height="3.4" fill="#f4e850"/><rect x="343.85" y="64.95" width="1.1" height="1.1" fill="#1a1a1a"/><rect x="357.15" y="64.15" width="2.7" height="2.7" fill="#444" stroke="#8a8a8a" stroke-width="0.8"/><path d="M347.6 56.2L358.8 61.6L358.4 62.4L347 57.6Z" fill="#bdbdbd" stroke="#555" stroke-width="0.4"/><path d="M348.4 55L357.2 65.2L356.4 65.6L347.4 56.2Z" fill="#c8c8c8" stroke="#555" stroke-width="0.4"/><ellipse cx="346.8" cy="50.8" rx="1.2" ry="2.2" transform="rotate(-18 346.8 50.8)" fill="#5a3a20" stroke="#e07420" stroke-width="1.2"/><ellipse cx="344.2" cy="55.7" rx="1.3" ry="2.1" transform="rotate(-62 344.2 55.7)" fill="#5a3a20" stroke="#e07420" stroke-width="1.2"/><path d="M347.4 53.2L348.6 56M346.2 56.2L348 56.6" stroke="#e8761c" stroke-width="1.3"/><path d="M377.5 57.2L377.5 49.5" stroke="#1c1c1c" stroke-width="1.6" opacity="0.8"/><path d="M376.8 56.5L376.8 48.8" stroke="#6bb0e4" stroke-width="1.2"/><path d="M377.5 57.2L369.8 57.2" stroke="#1c1c1c" stroke-width="1.6" opacity="0.8"/><path d="M376.8 56.5L369.1 56.5" stroke="#6bb0e4" stroke-width="1.2"/><path d="M377.5 61.0L377.5 68.7" stroke="#1c1c1c" stroke-width="1.6" opacity="0.8"/><path d="M376.8 60.3L376.8 68.0" stroke="#6bb0e4" stroke-width="1.2"/><path d="M377.5 61.0L369.8 61.0" stroke="#1c1c1c" stroke-width="1.6" opacity="0.8"/><path d="M376.8 60.3L369.1 60.3" stroke="#6bb0e4" stroke-width="1.2"/><path d="M381.29999999999995 57.2L381.29999999999995 49.5" stroke="#1c1c1c" stroke-width="1.6" opacity="0.8"/><path d="M380.59999999999997 56.5L380.59999999999997 48.8" stroke="#6bb0e4" stroke-width="1.2"/><path d="M381.29999999999995 57.2L388.99999999999994 57.2" stroke="#1c1c1c" stroke-width="1.6" opacity="0.8"/><path d="M380.59999999999997 56.5L388.29999999999995 56.5" stroke="#6bb0e4" stroke-width="1.2"/><path d="M381.29999999999995 61.0L381.29999999999995 68.7" stroke="#1c1c1c" stroke-width="1.6" opacity="0.8"/><path d="M380.59999999999997 60.3L380.59999999999997 68.0" stroke="#6bb0e4" stroke-width="1.2"/><path d="M381.29999999999995 61.0L388.99999999999994 61.0" stroke="#1c1c1c" stroke-width="1.6" opacity="0.8"/><path d="M380.59999999999997 60.3L388.29999999999995 60.3" stroke="#6bb0e4" stroke-width="1.2"/><path d="M375.10 54.60L372.80 51.50L373.99 50.29L369.10 48.70L370.77 53.57L371.96 52.35Z" fill="#181818" opacity="0.6" transform="translate(0.7,0.8)"/><path d="M375.10 54.60L372.80 51.50L373.99 50.29L369.10 48.70L370.77 53.57L371.96 52.35Z" fill="#d3222a"/><path d="M375.10 62.20L371.96 64.45L370.77 63.23L369.10 68.10L373.99 66.51L372.80 65.30Z" fill="#181818" opacity="0.6" transform="translate(0.7,0.8)"/><path d="M375.10 62.20L371.96 64.45L370.77 63.23L369.10 68.10L373.99 66.51L372.80 65.30Z" fill="#d3222a"/><path d="M382.30 54.60L385.44 52.35L386.63 53.57L388.30 48.70L383.41 50.29L384.60 51.50Z" fill="#181818" opacity="0.6" transform="translate(0.7,0.8)"/><path d="M382.30 54.60L385.44 52.35L386.63 53.57L388.30 48.70L383.41 50.29L384.60 51.50Z" fill="#d3222a"/><path d="M382.30 62.20L384.60 65.30L383.41 66.51L388.30 68.10L386.63 63.23L385.44 64.45Z" fill="#181818" opacity="0.6" transform="translate(0.7,0.8)"/><path d="M382.30 62.20L384.60 65.30L383.41 66.51L388.30 68.10L386.63 63.23L385.44 64.45Z" fill="#d3222a"/><defs><linearGradient id="fg1" x1="0" y1="0" x2="0" y2="1"><stop offset="0" stop-color="#6e6e6e"/><stop offset="1" stop-color="#6e6e6e" stop-opacity="0"/></linearGradient><linearGradient id="fg2" x1="0" y1="0" x2="1" y2="0"><stop offset="0" stop-color="#6e6e6e"/><stop offset="1" stop-color="#6e6e6e" stop-opacity="0.1"/></linearGradient></defs><rect x="344" y="78.2" width="1.1" height="13.5" fill="url(#fg1)"/><rect x="344" y="78.2" width="14" height="1.1" fill="url(#fg2)"/><path d="M343.2 95.2L362 76.2" stroke="#0e0e0e" stroke-width="0.85"/><path d="M343.6 95.8L362.4 76.8" stroke="#777" stroke-width="0.5"/><path d="M359.2 81.7L359.2 89.9" stroke="#1c1c1c" stroke-width="1.6" opacity="0.8"/><path d="M358.5 81L358.5 89.2" stroke="#6bb0e4" stroke-width="1.2"/><path d="M347.9 93.3L356.09999999999997 93.3" stroke="#1c1c1c" stroke-width="1.6" opacity="0.8"/><path d="M347.2 92.6L355.4 92.6" stroke="#6bb0e4" stroke-width="1.2"/><rect x="355.3" y="89.4" width="6.5" height="6.4" fill="none" stroke="#d9262e" stroke-width="1"/><rect x="357.20" y="91.30" width="3.6" height="3.6" fill="#1a1a1a" opacity="0.8"/><rect x="356.80" y="90.90" width="3.4" height="3.4" fill="#f4e850"/><rect x="357.95" y="92.05" width="1.1" height="1.1" fill="#1a1a1a"/><path d="M385.5 89.3L389.7 89.3" stroke="#1c1c1c" stroke-width="1.6" opacity="0.8"/><path d="M384.8 88.6L389 88.6" stroke="#6bb0e4" stroke-width="1.2"/><path d="M382.0 92.7L382.0 96.7" stroke="#1c1c1c" stroke-width="1.6" opacity="0.8"/><path d="M381.3 92L381.3 96" stroke="#6bb0e4" stroke-width="1.2"/><path d="M381.3 82V85.2M375 88.6H378" stroke="#c8c8c8" stroke-width="1.2"/><path d="M381.3 76.2L384 82.2H378.6Z" fill="#2fb334"/><path d="M381.3 76.2L384 82.2H381.3Z" fill="#1f8f27"/><path d="M368.8 88.6L375 85.8V91.4Z" fill="#2020d8"/><path d="M368.8 88.6L375 88.6V91.4Z" fill="#1414a0"/><rect x="378.1" y="85.4" width="6.5" height="6.4" fill="none" stroke="#d9262e" stroke-width="1"/><rect x="380.00" y="87.30" width="3.6" height="3.6" fill="#1a1a1a" opacity="0.8"/><rect x="379.60" y="86.90" width="3.4" height="3.4" fill="#f4e850"/><rect x="380.75" y="88.05" width="1.1" height="1.1" fill="#1a1a1a"/><path d="M409.9 53H416" fill="none" stroke="#111" stroke-width="3.4" stroke-linecap="round" stroke-linejoin="round" opacity="0.65" transform="translate(0.9,0.9)"/><path d="M409.9 53H416" fill="none" stroke="#6bb0e4" stroke-width="3.4" stroke-linecap="round" stroke-linejoin="round"/><path d="M409.9 53H416" fill="none" stroke="#2b5d88" stroke-width="1.5" stroke-linecap="round" stroke-linejoin="round"/><path d="M416 58.8H409.9V65" fill="none" stroke="#111" stroke-width="3.4" stroke-linecap="round" stroke-linejoin="round" opacity="0.65" transform="translate(0.9,0.9)"/><path d="M416 58.8H409.9V65" fill="none" stroke="#6bb0e4" stroke-width="3.4" stroke-linecap="round" stroke-linejoin="round"/><path d="M416 58.8H409.9V65" fill="none" stroke="#2b5d88" stroke-width="1.5" stroke-linecap="round" stroke-linejoin="round"/><path d="M422.5 53.1V65H416.5" fill="none" stroke="#111" stroke-width="3.4" stroke-linecap="round" stroke-linejoin="round" opacity="0.65" transform="translate(0.9,0.9)"/><path d="M422.5 53.1V65H416.5" fill="none" stroke="#6bb0e4" stroke-width="3.4" stroke-linecap="round" stroke-linejoin="round"/><path d="M422.5 53.1V65H416.5" fill="none" stroke="#2b5d88" stroke-width="1.5" stroke-linecap="round" stroke-linejoin="round"/><path d="M440.09999999999997 50.7L440.09999999999997 68.7" stroke="#1c1c1c" stroke-width="1.6" opacity="0.8"/><path d="M439.4 50L439.4 68" stroke="#6bb0e4" stroke-width="1.2"/><path d="M447.2 50.7L447.2 68.7" stroke="#1c1c1c" stroke-width="1.6" opacity="0.8"/><path d="M446.5 50L446.5 68" stroke="#6bb0e4" stroke-width="1.2"/><path d="M434.9 56.2L452.9 56.2" stroke="#1c1c1c" stroke-width="1.6" opacity="0.8"/><path d="M434.2 55.5L452.2 55.5" stroke="#6bb0e4" stroke-width="1.2"/><path d="M434.9 63.300000000000004L452.9 63.300000000000004" stroke="#1c1c1c" stroke-width="1.6" opacity="0.8"/><path d="M434.2 62.6L452.2 62.6" stroke="#6bb0e4" stroke-width="1.2"/><rect x="438.10" y="54.20" width="3.6" height="3.6" fill="#1a1a1a" opacity="0.8"/><rect x="437.70" y="53.80" width="3.4" height="3.4" fill="#f4e850"/><rect x="438.85" y="54.95" width="1.1" height="1.1" fill="#1a1a1a"/><rect x="438.10" y="61.30" width="3.6" height="3.6" fill="#1a1a1a" opacity="0.8"/><rect x="437.70" y="60.90" width="3.4" height="3.4" fill="#f4e850"/><rect x="438.85" y="62.05" width="1.1" height="1.1" fill="#1a1a1a"/><rect x="445.20" y="54.20" width="3.6" height="3.6" fill="#1a1a1a" opacity="0.8"/><rect x="444.80" y="53.80" width="3.4" height="3.4" fill="#f4e850"/><rect x="445.95" y="54.95" width="1.1" height="1.1" fill="#1a1a1a"/><rect x="445.20" y="61.30" width="3.6" height="3.6" fill="#1a1a1a" opacity="0.8"/><rect x="444.80" y="60.90" width="3.4" height="3.4" fill="#f4e850"/><rect x="445.95" y="62.05" width="1.1" height="1.1" fill="#1a1a1a"/><rect x="413.2" y="83.4" width="4.1" height="4.1" fill="#151515" opacity="0.7"/><rect x="409.09999999999997" y="87.5" width="4.1" height="4.1" fill="#151515" opacity="0.7"/><rect x="413.2" y="87.5" width="4.1" height="4.1" fill="#151515" opacity="0.7"/><rect x="417.29999999999995" y="87.5" width="4.1" height="4.1" fill="#151515" opacity="0.7"/><rect x="421.4" y="87.5" width="4.1" height="4.1" fill="#151515" opacity="0.7"/><rect x="413.2" y="91.60000000000001" width="4.1" height="4.1" fill="#151515" opacity="0.7"/><rect x="412.3" y="82.5" width="4.1" height="4.1" fill="#2b5d88" stroke="#6bb0e4" stroke-width="1"/><rect x="408.2" y="86.6" width="4.1" height="4.1" fill="#2b5d88" stroke="#6bb0e4" stroke-width="1"/><rect x="412.3" y="86.6" width="4.1" height="4.1" fill="#2b5d88" stroke="#6bb0e4" stroke-width="1"/><rect x="416.4" y="86.6" width="4.1" height="4.1" fill="#2b5d88" stroke="#6bb0e4" stroke-width="1"/><rect x="420.5" y="86.6" width="4.1" height="4.1" fill="#2b5d88" stroke="#6bb0e4" stroke-width="1"/><rect x="412.3" y="90.7" width="4.1" height="4.1" fill="#2b5d88" stroke="#6bb0e4" stroke-width="1"/><path d="M406 78.2L409.6 76.3L412.8 77.6V81.8L409.2 83.8L406 82.2Z" fill="#9fd0f0"/><path d="M406 78.2L409.6 76.3L412.8 77.6L409.2 79.5Z" fill="#eef8ff"/><path d="M409.2 79.5L412.8 77.6V81.8L409.2 83.8Z" fill="#5b9fd0"/><path d="M414 78.5H419.8A1.5 1.5 0 0 1 421.3 80V82" fill="none" stroke="#d3222a" stroke-width="1.2"/><path d="M418.6 81.2H424L421.3 85.8Z" fill="#d3222a"/><path d="M433.2 94.6L451.5 76.2" stroke="#0e0e0e" stroke-width="0.85"/><path d="M433.7 95.1L452 76.7" stroke="#777" stroke-width="0.5"/><rect x="434.20" y="77.20" width="3.6" height="3.6" fill="#1a1a1a" opacity="0.8"/><rect x="433.80" y="76.80" width="3.4" height="3.4" fill="#f4e850"/><rect x="434.95" y="77.95" width="1.1" height="1.1" fill="#1a1a1a"/><rect x="438.20" y="77.20" width="3.6" height="3.6" fill="#1a1a1a" opacity="0.8"/><rect x="437.80" y="76.80" width="3.4" height="3.4" fill="#f4e850"/><rect x="438.95" y="77.95" width="1.1" height="1.1" fill="#1a1a1a"/><rect x="434.20" y="81.30" width="3.6" height="3.6" fill="#1a1a1a" opacity="0.8"/><rect x="433.80" y="80.90" width="3.4" height="3.4" fill="#f4e850"/><rect x="434.95" y="82.05" width="1.1" height="1.1" fill="#1a1a1a"/><rect x="438.20" y="81.30" width="3.6" height="3.6" fill="#1a1a1a" opacity="0.8"/><rect x="437.80" y="80.90" width="3.4" height="3.4" fill="#f4e850"/><rect x="438.95" y="82.05" width="1.1" height="1.1" fill="#1a1a1a"/><path d="M444.0 87.2L451.3 87.2" stroke="#1c1c1c" stroke-width="1.6" opacity="0.8"/><path d="M443.3 86.5L450.6 86.5" stroke="#6bb0e4" stroke-width="1.2"/><path d="M444.0 94.10000000000001L451.3 94.10000000000001" stroke="#1c1c1c" stroke-width="1.6" opacity="0.8"/><path d="M443.3 93.4L450.6 93.4" stroke="#6bb0e4" stroke-width="1.2"/><path d="M444.0 87.2L444.0 94.10000000000001" stroke="#1c1c1c" stroke-width="1.6" opacity="0.8"/><path d="M443.3 86.5L443.3 93.4" stroke="#6bb0e4" stroke-width="1.2"/><path d="M451.3 87.2L451.3 94.10000000000001" stroke="#1c1c1c" stroke-width="1.6" opacity="0.8"/><path d="M450.6 86.5L450.6 93.4" stroke="#6bb0e4" stroke-width="1.2"/><rect x="442.00" y="85.20" width="3.6" height="3.6" fill="#1a1a1a" opacity="0.8"/><rect x="441.60" y="84.80" width="3.4" height="3.4" fill="#f4e850"/><rect x="442.75" y="85.95" width="1.1" height="1.1" fill="#1a1a1a"/><rect x="449.30" y="85.20" width="3.6" height="3.6" fill="#1a1a1a" opacity="0.8"/><rect x="448.90" y="84.80" width="3.4" height="3.4" fill="#f4e850"/><rect x="450.05" y="85.95" width="1.1" height="1.1" fill="#1a1a1a"/><rect x="442.00" y="92.10" width="3.6" height="3.6" fill="#1a1a1a" opacity="0.8"/><rect x="441.60" y="91.70" width="3.4" height="3.4" fill="#f4e850"/><rect x="442.75" y="92.85" width="1.1" height="1.1" fill="#1a1a1a"/><rect x="449.30" y="92.10" width="3.6" height="3.6" fill="#1a1a1a" opacity="0.8"/><rect x="448.90" y="91.70" width="3.4" height="3.4" fill="#f4e850"/><rect x="450.05" y="92.85" width="1.1" height="1.1" fill="#1a1a1a"/><path d="M473.09999999999997 52.2L473.09999999999997 66.2" stroke="#1c1c1c" stroke-width="1.6" opacity="0.8"/><path d="M472.4 51.5L472.4 65.5" stroke="#6bb0e4" stroke-width="1.2"/><rect x="471.10" y="50.20" width="3.6" height="3.6" fill="#1a1a1a" opacity="0.8"/><rect x="470.70" y="49.80" width="3.4" height="3.4" fill="#f4e850"/><rect x="471.85" y="50.95" width="1.1" height="1.1" fill="#1a1a1a"/><rect x="471.10" y="57.30" width="3.6" height="3.6" fill="#1a1a1a" opacity="0.8"/><rect x="470.70" y="56.90" width="3.4" height="3.4" fill="#f4e850"/><rect x="471.85" y="58.05" width="1.1" height="1.1" fill="#1a1a1a"/><rect x="471.10" y="64.20" width="3.6" height="3.6" fill="#1a1a1a" opacity="0.8"/><rect x="470.70" y="63.80" width="3.4" height="3.4" fill="#f4e850"/><rect x="471.85" y="64.95" width="1.1" height="1.1" fill="#1a1a1a"/><path d="M489.50 58.60L482.00 58.10L482.00 56.00L476.00 58.60L482.00 61.20L482.00 59.10Z" fill="#181818" opacity="0.6" transform="translate(0.7,0.8)"/><path d="M489.50 58.60L482.00 58.10L482.00 56.00L476.00 58.60L482.00 61.20L482.00 59.10Z" fill="#d3222a"/><path d="M515.1 52.2L515.1 66.2" stroke="#1c1c1c" stroke-width="1.6" opacity="0.8"/><path d="M514.4 51.5L514.4 65.5" stroke="#6bb0e4" stroke-width="1.2"/><rect x="513.10" y="50.20" width="3.6" height="3.6" fill="#1a1a1a" opacity="0.8"/><rect x="512.70" y="49.80" width="3.4" height="3.4" fill="#f4e850"/><rect x="513.85" y="50.95" width="1.1" height="1.1" fill="#1a1a1a"/><rect x="513.10" y="57.30" width="3.6" height="3.6" fill="#1a1a1a" opacity="0.8"/><rect x="512.70" y="56.90" width="3.4" height="3.4" fill="#f4e850"/><rect x="513.85" y="58.05" width="1.1" height="1.1" fill="#1a1a1a"/><rect x="513.10" y="64.20" width="3.6" height="3.6" fill="#1a1a1a" opacity="0.8"/><rect x="512.70" y="63.80" width="3.4" height="3.4" fill="#f4e850"/><rect x="513.85" y="64.95" width="1.1" height="1.1" fill="#1a1a1a"/><path d="M497.30 58.60L504.80 59.10L504.80 61.20L510.80 58.60L504.80 56.00L504.80 58.10Z" fill="#181818" opacity="0.6" transform="translate(0.7,0.8)"/><path d="M497.30 58.60L504.80 59.10L504.80 61.20L510.80 58.60L504.80 56.00L504.80 58.10Z" fill="#d3222a"/><path d="M473.09999999999997 94.10000000000001L487.0 94.10000000000001" stroke="#1c1c1c" stroke-width="1.6" opacity="0.8"/><path d="M472.4 93.4L486.3 93.4" stroke="#6bb0e4" stroke-width="1.2"/><rect x="471.10" y="92.10" width="3.6" height="3.6" fill="#1a1a1a" opacity="0.8"/><rect x="470.70" y="91.70" width="3.4" height="3.4" fill="#f4e850"/><rect x="471.85" y="92.85" width="1.1" height="1.1" fill="#1a1a1a"/><rect x="478.00" y="92.10" width="3.6" height="3.6" fill="#1a1a1a" opacity="0.8"/><rect x="477.60" y="91.70" width="3.4" height="3.4" fill="#f4e850"/><rect x="478.75" y="92.85" width="1.1" height="1.1" fill="#1a1a1a"/><rect x="485.00" y="92.10" width="3.6" height="3.6" fill="#1a1a1a" opacity="0.8"/><rect x="484.60" y="91.70" width="3.4" height="3.4" fill="#f4e850"/><rect x="485.75" y="92.85" width="1.1" height="1.1" fill="#1a1a1a"/><path d="M479.30 76.60L478.80 83.60L476.70 83.60L479.30 89.60L481.90 83.60L479.80 83.60Z" fill="#181818" opacity="0.6" transform="translate(0.7,0.8)"/><path d="M479.30 76.60L478.80 83.60L476.70 83.60L479.30 89.60L481.90 83.60L479.80 83.60Z" fill="#d3222a"/><path d="M500.09999999999997 79.2L514.0 79.2" stroke="#1c1c1c" stroke-width="1.6" opacity="0.8"/><path d="M499.4 78.5L513.3 78.5" stroke="#6bb0e4" stroke-width="1.2"/><rect x="498.10" y="77.20" width="3.6" height="3.6" fill="#1a1a1a" opacity="0.8"/><rect x="497.70" y="76.80" width="3.4" height="3.4" fill="#f4e850"/><rect x="498.85" y="77.95" width="1.1" height="1.1" fill="#1a1a1a"/><rect x="505.00" y="77.20" width="3.6" height="3.6" fill="#1a1a1a" opacity="0.8"/><rect x="504.60" y="76.80" width="3.4" height="3.4" fill="#f4e850"/><rect x="505.75" y="77.95" width="1.1" height="1.1" fill="#1a1a1a"/><rect x="512.00" y="77.20" width="3.6" height="3.6" fill="#1a1a1a" opacity="0.8"/><rect x="511.60" y="76.80" width="3.4" height="3.4" fill="#f4e850"/><rect x="512.75" y="77.95" width="1.1" height="1.1" fill="#1a1a1a"/><path d="M506.30 95.40L506.80 88.40L508.90 88.40L506.30 82.40L503.70 88.40L505.80 88.40Z" fill="#181818" opacity="0.6" transform="translate(0.7,0.8)"/><path d="M506.30 95.40L506.80 88.40L508.90 88.40L506.30 82.40L503.70 88.40L505.80 88.40Z" fill="#d3222a"/><path d="M535.2 50.6H551.8000000000001V66.8H535.2ZM543.5 50.6V66.8M535.2 58.7H551.8000000000001" fill="none" stroke="#626262" stroke-width="1"/><path d="M544.2 59.400000000000006L552.1 59.400000000000006" stroke="#1c1c1c" stroke-width="1.6" opacity="0.8"/><path d="M543.5 58.7L551.4 58.7" stroke="#6bb0e4" stroke-width="1.2"/><path d="M544.2 67.2L552.1 67.2" stroke="#1c1c1c" stroke-width="1.6" opacity="0.8"/><path d="M543.5 66.5L551.4 66.5" stroke="#6bb0e4" stroke-width="1.2"/><path d="M544.2 59.400000000000006L544.2 67.2" stroke="#1c1c1c" stroke-width="1.6" opacity="0.8"/><path d="M543.5 58.7L543.5 66.5" stroke="#6bb0e4" stroke-width="1.2"/><path d="M552.1 59.400000000000006L552.1 67.2" stroke="#1c1c1c" stroke-width="1.6" opacity="0.8"/><path d="M551.4 58.7L551.4 66.5" stroke="#6bb0e4" stroke-width="1.2"/><rect x="542.20" y="57.40" width="3.6" height="3.6" fill="#1a1a1a" opacity="0.8"/><rect x="541.80" y="57.00" width="3.4" height="3.4" fill="#f4e850"/><rect x="542.95" y="58.15" width="1.1" height="1.1" fill="#1a1a1a"/><rect x="550.10" y="57.40" width="3.6" height="3.6" fill="#1a1a1a" opacity="0.8"/><rect x="549.70" y="57.00" width="3.4" height="3.4" fill="#f4e850"/><rect x="550.85" y="58.15" width="1.1" height="1.1" fill="#1a1a1a"/><rect x="542.20" y="65.20" width="3.6" height="3.6" fill="#1a1a1a" opacity="0.8"/><rect x="541.80" y="64.80" width="3.4" height="3.4" fill="#f4e850"/><rect x="542.95" y="65.95" width="1.1" height="1.1" fill="#1a1a1a"/><rect x="550.10" y="65.20" width="3.6" height="3.6" fill="#1a1a1a" opacity="0.8"/><rect x="549.70" y="64.80" width="3.4" height="3.4" fill="#f4e850"/><rect x="550.85" y="65.95" width="1.1" height="1.1" fill="#1a1a1a"/><path d="M562 50.6H578.6V66.8H562ZM570.3 50.6V66.8M562 58.7H578.6" fill="none" stroke="#626262" stroke-width="1"/><path d="M571.1 59.400000000000006L579.2 59.400000000000006" stroke="#1c1c1c" stroke-width="1.6" opacity="0.8"/><path d="M570.4 58.7L578.5 58.7" stroke="#6bb0e4" stroke-width="1.2"/><path d="M571.1 67.2L579.2 67.2" stroke="#1c1c1c" stroke-width="1.6" opacity="0.8"/><path d="M570.4 66.5L578.5 66.5" stroke="#6bb0e4" stroke-width="1.2"/><path d="M571.1 59.400000000000006L571.1 67.2" stroke="#1c1c1c" stroke-width="1.6" opacity="0.8"/><path d="M570.4 58.7L570.4 66.5" stroke="#6bb0e4" stroke-width="1.2"/><path d="M579.2 59.400000000000006L579.2 67.2" stroke="#1c1c1c" stroke-width="1.6" opacity="0.8"/><path d="M578.5 58.7L578.5 66.5" stroke="#6bb0e4" stroke-width="1.2"/><rect x="569.10" y="57.40" width="3.6" height="3.6" fill="#1a1a1a" opacity="0.8"/><rect x="568.70" y="57.00" width="3.4" height="3.4" fill="#f4e850"/><rect x="569.85" y="58.15" width="1.1" height="1.1" fill="#1a1a1a"/><rect x="577.20" y="57.40" width="3.6" height="3.6" fill="#1a1a1a" opacity="0.8"/><rect x="576.80" y="57.00" width="3.4" height="3.4" fill="#f4e850"/><rect x="577.95" y="58.15" width="1.1" height="1.1" fill="#1a1a1a"/><rect x="569.10" y="65.20" width="3.6" height="3.6" fill="#1a1a1a" opacity="0.8"/><rect x="568.70" y="64.80" width="3.4" height="3.4" fill="#f4e850"/><rect x="569.85" y="65.95" width="1.1" height="1.1" fill="#1a1a1a"/><rect x="577.20" y="65.20" width="3.6" height="3.6" fill="#1a1a1a" opacity="0.8"/><rect x="576.80" y="64.80" width="3.4" height="3.4" fill="#f4e850"/><rect x="577.95" y="65.95" width="1.1" height="1.1" fill="#1a1a1a"/><path d="M563.7 49.8H565.3V51.8H567.3V53.4H565.3V55.4H563.7V53.4H561.7V51.8H563.7Z" fill="#d3222a" stroke="#fff" stroke-width="1.3" paint-order="stroke" stroke-linejoin="round"/><path d="M535.4 77.5H552.0V93.7H535.4ZM543.6999999999999 77.5V93.7M535.4 85.6H552.0" fill="none" stroke="#626262" stroke-width="1"/><path d="M544.2 86.3L551.9000000000001 86.3" stroke="#1c1c1c" stroke-width="1.5" opacity="0.8"/><path d="M543.5 85.6L551.2 85.6" stroke="#b0b0b0" stroke-width="1.1"/><path d="M544.2 94.2L551.9000000000001 94.2" stroke="#1c1c1c" stroke-width="1.5" opacity="0.8"/><path d="M543.5 93.5L551.2 93.5" stroke="#b0b0b0" stroke-width="1.1"/><path d="M551.9000000000001 86.3L551.9000000000001 94.2" stroke="#1c1c1c" stroke-width="1.5" opacity="0.8"/><path d="M551.2 85.6L551.2 93.5" stroke="#b0b0b0" stroke-width="1.1"/><path d="M544.2 86.3L544.2 94.2" stroke="#1c1c1c" stroke-width="1.5" opacity="0.8"/><path d="M543.5 85.6L543.5 93.5" stroke="#b0b0b0" stroke-width="1.1"/><path d="M536.1 78.2L544.2 78.2" stroke="#1c1c1c" stroke-width="1.6" opacity="0.8"/><path d="M535.4 77.5L543.5 77.5" stroke="#6bb0e4" stroke-width="1.2"/><path d="M536.1 86.3L544.2 86.3" stroke="#1c1c1c" stroke-width="1.6" opacity="0.8"/><path d="M535.4 85.6L543.5 85.6" stroke="#6bb0e4" stroke-width="1.2"/><path d="M536.1 78.2L536.1 86.3" stroke="#1c1c1c" stroke-width="1.6" opacity="0.8"/><path d="M535.4 77.5L535.4 85.6" stroke="#6bb0e4" stroke-width="1.2"/><path d="M544.2 78.2L544.2 86.3" stroke="#1c1c1c" stroke-width="1.6" opacity="0.8"/><path d="M543.5 77.5L543.5 85.6" stroke="#6bb0e4" stroke-width="1.2"/><rect x="549.90" y="84.30" width="3.6" height="3.6" fill="#1a1a1a" opacity="0.8"/><rect x="549.50" y="83.90" width="3.4" height="3.4" fill="#d0d0d0"/><rect x="550.65" y="85.05" width="1.1" height="1.1" fill="#1a1a1a"/><rect x="542.20" y="92.20" width="3.6" height="3.6" fill="#1a1a1a" opacity="0.8"/><rect x="541.80" y="91.80" width="3.4" height="3.4" fill="#d0d0d0"/><rect x="542.95" y="92.95" width="1.1" height="1.1" fill="#1a1a1a"/><rect x="549.90" y="92.20" width="3.6" height="3.6" fill="#1a1a1a" opacity="0.8"/><rect x="549.50" y="91.80" width="3.4" height="3.4" fill="#d0d0d0"/><rect x="550.65" y="92.95" width="1.1" height="1.1" fill="#1a1a1a"/><rect x="534.10" y="76.20" width="3.6" height="3.6" fill="#1a1a1a" opacity="0.8"/><rect x="533.70" y="75.80" width="3.4" height="3.4" fill="#f4e850"/><rect x="534.85" y="76.95" width="1.1" height="1.1" fill="#1a1a1a"/><rect x="542.20" y="76.20" width="3.6" height="3.6" fill="#1a1a1a" opacity="0.8"/><rect x="541.80" y="75.80" width="3.4" height="3.4" fill="#f4e850"/><rect x="542.95" y="76.95" width="1.1" height="1.1" fill="#1a1a1a"/><rect x="534.10" y="84.30" width="3.6" height="3.6" fill="#1a1a1a" opacity="0.8"/><rect x="533.70" y="83.90" width="3.4" height="3.4" fill="#f4e850"/><rect x="534.85" y="85.05" width="1.1" height="1.1" fill="#1a1a1a"/><rect x="542.20" y="84.30" width="3.6" height="3.6" fill="#1a1a1a" opacity="0.8"/><rect x="541.80" y="83.90" width="3.4" height="3.4" fill="#f4e850"/><rect x="542.95" y="85.05" width="1.1" height="1.1" fill="#1a1a1a"/><path d="M562 77.5H578.6V93.7H562ZM570.3 77.5V93.7M562 85.6H578.6" fill="none" stroke="#626262" stroke-width="1"/><rect x="570.6" y="85.8" width="7.9" height="7.8" fill="#444" stroke="#181818" stroke-width="2"/><rect x="570.4" y="85.6" width="7.9" height="7.8" fill="none" stroke="#6bb0e4" stroke-width="1.2"/><rect x="561.8" y="78.9" width="5.4" height="1.5" fill="#d3222a" stroke="#fff" stroke-width="1.3" paint-order="stroke" stroke-linejoin="round"/><rect x="595.5" y="46.5" width="25" height="25" rx="4" fill="#5e5e5e" stroke="#2b2b2b" stroke-width="1"/><rect x="659.5" y="46.5" width="25" height="25" rx="4" fill="#5e5e5e" stroke="#2b2b2b" stroke-width="1"/><rect x="600.6" y="50.6" width="14.8" height="16.8" fill="#f0b492" stroke="#2a2a2a" stroke-width="1"/><path d="M601.1 51.1H614.9V61.016000000000005L613.328 58.664L611.256 60.008C609.48 56.648 606.224 54.968 601.1 54.632000000000005Z" fill="#1432c8"/><path d="M608.0 53.96C610.96 55.64 613.1800000000001 57.32 614.9 59.84V55.64Z" fill="#0a1e96" opacity="0.6"/><path d="M603.264 59.0L606.224 59.84" stroke="#6a4a5a" stroke-width="0.9"/><path d="M601.4 64.712L602.9680000000001 65.048" stroke="#c03838" stroke-width="1"/><defs><filter id="blr" x="-20%" y="-20%" width="140%" height="140%"><feGaussianBlur stdDeviation="0.85"/></filter></defs><g filter="url(#blr)"><rect x="625.4" y="49.6" width="4.6" height="4.6" fill="#000"/><rect x="630" y="50" width="4.2" height="4.2" fill="#fff"/><rect x="625.8" y="54.2" width="4.2" height="4.2" fill="#fff"/><rect x="630" y="54.2" width="4.6" height="4.6" fill="#000"/></g><path d="M625.1 69L644.8 49.1" stroke="#0e0e0e" stroke-width="0.85"/><path d="M625.6 69.5L645.3 49.6" stroke="#777" stroke-width="0.5"/><rect x="636" y="59.8" width="4.1" height="4.2" fill="#000"/><rect x="640.1" y="59.8" width="4.1" height="4.2" fill="#fff"/><rect x="636" y="64" width="4.1" height="4.2" fill="#fff"/><rect x="640.1" y="64" width="4.1" height="4.2" fill="#000"/><rect x="598.6" y="76.7" width="11.8" height="12.6" fill="#f0b492" stroke="#2a2a2a" stroke-width="1"/><path d="M599.1 77.2H609.9V84.512L608.748 82.748L607.096 83.756C605.6800000000001 81.236 603.0840000000001 79.976 599.1 79.724Z" fill="#1432c8"/><path d="M604.5 79.22C606.86 80.48 608.63 81.74000000000001 609.9 83.63000000000001V80.48Z" fill="#0a1e96" opacity="0.6"/><path d="M600.724 83.0L603.0840000000001 83.63000000000001" stroke="#6a4a5a" stroke-width="0.9"/><path d="M599.4 87.284L600.488 87.536" stroke="#c03838" stroke-width="1"/><rect x="603.6" y="79.6" width="13.9" height="15.5" fill="#c6c6c6" stroke="#2a2a2a" stroke-width="1"/><path d="M604.1 80.1H617.0V89.21L615.554 87.03999999999999L613.6080000000001 88.28C611.94 85.17999999999999 608.8820000000001 83.63 604.1 83.32Z" fill="#686868"/><path d="M610.5500000000001 82.69999999999999C613.33 84.25 615.4150000000001 85.8 617.0 88.125V84.25Z" fill="#5a5a5a" opacity="0.6"/><path d="M606.102 87.35L608.8820000000001 88.125" stroke="#777" stroke-width="0.9"/><path d="M604.4 92.61999999999999L605.8240000000001 92.92999999999999" stroke="#aaa" stroke-width="1"/><rect x="662" y="49.2" width="13.4" height="13.2" fill="#4b4b4b"/><rect x="661.90" y="49.2" width="1" height="13.2" fill="#7a7a7a"/><rect x="662" y="49.10" width="13.4" height="1" fill="#7a7a7a"/><rect x="666.03" y="49.2" width="1" height="13.2" fill="#7a7a7a"/><rect x="662" y="53.17" width="13.4" height="1" fill="#7a7a7a"/><rect x="670.16" y="49.2" width="1" height="13.2" fill="#7a7a7a"/><rect x="662" y="57.24" width="13.4" height="1" fill="#7a7a7a"/><rect x="674.29" y="49.2" width="1" height="13.2" fill="#7a7a7a"/><rect x="662" y="61.31" width="13.4" height="1" fill="#7a7a7a"/><rect x="668.9" y="56.3" width="13.2" height="12.6" fill="#111" opacity="0.8"/><rect x="667.9" y="55.3" width="13.3" height="12.7" fill="#0a0a0a"/><rect x="670.30" y="57.50" width="2.2" height="2" fill="#666"/><rect x="670.30" y="61.50" width="2.2" height="2" fill="#666"/><rect x="670.30" y="65.50" width="2.2" height="2" fill="#666"/><rect x="674.43" y="57.50" width="2.2" height="2" fill="#666"/><rect x="674.43" y="61.50" width="2.2" height="2" fill="#666"/><rect x="674.43" y="65.50" width="2.2" height="2" fill="#666"/><rect x="678.56" y="57.50" width="2.2" height="2" fill="#666"/><rect x="678.56" y="61.50" width="2.2" height="2" fill="#666"/><rect x="678.56" y="65.50" width="2.2" height="2" fill="#666"/><rect x="667.80" y="55.3" width="0.95" height="12.7" fill="#c6c6c6"/><rect x="667.9" y="55.20" width="13.3" height="0.95" fill="#c6c6c6"/><rect x="671.93" y="55.3" width="0.95" height="12.7" fill="#c6c6c6"/><rect x="667.9" y="59.10" width="13.3" height="0.95" fill="#c6c6c6"/><rect x="676.06" y="55.3" width="0.95" height="12.7" fill="#c6c6c6"/><rect x="667.9" y="63.00" width="13.3" height="0.95" fill="#c6c6c6"/><rect x="680.19" y="55.3" width="0.95" height="12.7" fill="#c6c6c6"/><rect x="667.9" y="66.90" width="13.3" height="0.95" fill="#c6c6c6"/><path d="M698.4 65.8L692.9 60.2C690.7 57.6 691.4 54 694.4 52.8C697 51.8 699.7 52.6 701.5 54.6L705.9 60.2" fill="none" stroke="#141414" stroke-width="4.4" opacity="0.5" transform="translate(0.5,0.8)"/><path d="M698.4 65.8L692.9 60.2C690.7 57.6 691.4 54 694.4 52.8C697 51.8 699.7 52.6 701.5 54.6L705.9 60.2" fill="none" stroke="#c8382c" stroke-width="4.1"/><path d="M698.4 65.8L692.9 60.2C690.7 57.6 691.4 54 694.4 52.8C697 51.8 699.7 52.6 701.5 54.6L705.9 60.2" fill="none" stroke="#e86a58" stroke-width="1.2" transform="translate(-0.5,-0.5)" opacity="0.7"/><path d="M698.4 65.8L697 64.3" stroke="#f4f4f4" stroke-width="4"/><path d="M705.9 60.2L704.7 58.6" stroke="#f4f4f4" stroke-width="4"/><rect x="718.6" y="51.6" width="11.4" height="11.4" fill="none" stroke="#161616" stroke-width="1" opacity="0.7"/><rect x="717.9" y="50.8" width="11.4" height="11.4" fill="none" stroke="#c8c8c8" stroke-width="1"/><rect x="724.8" y="58" width="10.4" height="10" fill="#161616" opacity="0.7"/><rect x="723.9" y="57.1" width="10.4" height="10" fill="#2b5d88" stroke="#6bb0e4" stroke-width="1.1"/><path d="M724.4 62.3H729.4V57.6" fill="none" stroke="#5682a6" stroke-width="0.9"/><defs><linearGradient id="brg" x1="0.2" y1="0" x2="0.7" y2="1"><stop offset="0" stop-color="#8090f0"/><stop offset="0.3" stop-color="#3050e0"/><stop offset="0.62" stop-color="#5038b0"/><stop offset="0.85" stop-color="#c81848"/><stop offset="1" stop-color="#d01840"/></linearGradient></defs><rect x="744.4" y="50.4" width="11.4" height="11.4" fill="none" stroke="#161616" stroke-width="1" opacity="0.7"/><rect x="743.7" y="49.7" width="11.4" height="11.4" fill="none" stroke="#c8c8c8" stroke-width="1"/><rect x="749.8" y="55.6" width="10.8" height="10.8" fill="url(#brg)" stroke="#6bb0e4" stroke-width="1.2"/><rect x="664.5" y="78.5" width="11.2" height="11.4" fill="none" stroke="#161616" stroke-width="1" opacity="0.7"/><rect x="663.8" y="77.8" width="11.2" height="11.4" fill="none" stroke="#c8c8c8" stroke-width="1"/><rect x="670.6" y="84.8" width="11.2" height="11" fill="#161616" opacity="0.7"/><rect x="669.7" y="83.9" width="11" height="10.8" fill="#444" stroke="#6bb0e4" stroke-width="1.2"/><rect x="671" y="85.2" width="8.4" height="8.2" fill="none" stroke="#2b5d88" stroke-width="1.2"/><rect x="672.3" y="86.5" width="5.8" height="5.6" fill="none" stroke="#6bb0e4" stroke-width="1"/><clipPath id="ckc"><rect x="687" y="74.3" width="22" height="21.6" rx="2.2"/></clipPath><g clip-path="url(#ckc)"><rect x="687" y="74.3" width="22" height="21.6" fill="#020808"/><rect x="687.20" y="79.90" width="5.1" height="5" fill="#4adede"/><rect x="687.20" y="90.70" width="5.1" height="5" fill="#4adede"/><rect x="692.70" y="74.50" width="5.1" height="5" fill="#4adede"/><rect x="692.70" y="85.30" width="5.1" height="5" fill="#4adede"/><rect x="698.20" y="79.90" width="5.1" height="5" fill="#4adede"/><rect x="698.20" y="90.70" width="5.1" height="5" fill="#4adede"/><rect x="703.70" y="74.50" width="5.1" height="5" fill="#4adede"/><rect x="703.70" y="85.30" width="5.1" height="5" fill="#4adede"/></g><defs><radialGradient id="sph" cx="0.5" cy="0.45" r="0.55"><stop offset="0.55" stop-color="#000" stop-opacity="0"/><stop offset="1" stop-color="#000" stop-opacity="0.75"/></radialGradient><clipPath id="spc"><circle cx="725" cy="86" r="9.3"/></clipPath></defs><rect x="715.1" y="76.2" width="19.9" height="19.7" fill="#000"/><g clip-path="url(#spc)"><rect x="715" y="76" width="10" height="20" fill="#d02434"/><rect x="725" y="76" width="10" height="20" fill="#2020f0"/><ellipse cx="725" cy="86" rx="3.9" ry="9.6" fill="#0a8a10"/><circle cx="725" cy="86" r="9.3" fill="url(#sph)"/></g><rect x="742" y="75.2" width="20.1" height="19.7" fill="#000"/><clipPath id="wcc"><circle cx="752" cy="85" r="9"/></clipPath><g clip-path="url(#wcc)"><rect x="743" y="76" width="18" height="18" fill="#fff"/><rect x="743" y="76" width="9" height="9" fill="#c6c6c6"/><rect x="752" y="85" width="9" height="9" fill="#c6c6c6"/></g><path d="M782.1 65.3L791 53.2L799 53.2L793.1 68.6Z" fill="#050505"/><ellipse cx="795.4" cy="55.2" rx="1.9" ry="1.2" fill="#fff" transform="rotate(-18 795.4 55.2)"/><ellipse cx="790.4" cy="57.6" rx="1.9" ry="1.2" fill="#fff" transform="rotate(-18 790.4 57.6)"/><ellipse cx="792.8" cy="62.2" rx="1.9" ry="1.2" fill="#fff" transform="rotate(-18 792.8 62.2)"/><ellipse cx="786.8" cy="64.6" rx="1.9" ry="1.2" fill="#fff" transform="rotate(-18 786.8 64.6)"/><path d="M781.70 52.00L781.20 57.80L779.40 57.80L781.70 62.80L784.00 57.80L782.20 57.80Z" fill="#181818" opacity="0.6" transform="translate(0.7,0.8)"/><path d="M781.70 52.00L781.20 57.80L779.40 57.80L781.70 62.80L784.00 57.80L782.20 57.80Z" fill="#d3222a"/><path d="M786.70 49.00L786.20 54.80L784.40 54.80L786.70 59.80L789.00 54.80L787.20 54.80Z" fill="#181818" opacity="0.6" transform="translate(0.7,0.8)"/><path d="M786.70 49.00L786.20 54.80L784.40 54.80L786.70 59.80L789.00 54.80L787.20 54.80Z" fill="#d3222a"/><path d="M808 58.6C806 54 808.5 51.4 812.5 51.2" fill="none" stroke="#123a16" stroke-width="3.6" opacity="0.55"/><path d="M812 48.6L817 51.6L812.2 54.4Z" fill="#123a16" stroke="#123a16" stroke-width="1" opacity="0.55"/><path d="M808 58.6C806 54 808.5 51.4 812.5 51.2" fill="none" stroke="#2fae3c" stroke-width="2.8"/><path d="M812 48.6L817 51.6L812.2 54.4Z" fill="#2fae3c" stroke="#2fae3c" stroke-width="0.6" stroke-linejoin="round"/><path d="M823.6 56.2C825.8 61 822.6 64.6 819.6 65.2" fill="none" stroke="#123a16" stroke-width="3.6" opacity="0.55"/><path d="M820.2 62.2L815.6 65.6L820.6 68.2Z" fill="#123a16" stroke="#123a16" stroke-width="1" opacity="0.55"/><path d="M823.6 56.2C825.8 61 822.6 64.6 819.6 65.2" fill="none" stroke="#2fae3c" stroke-width="2.8"/><path d="M820.2 62.2L815.6 65.6L820.6 68.2Z" fill="#2fae3c" stroke="#2fae3c" stroke-width="0.6" stroke-linejoin="round"/><text x="809.6" y="62.1" font-family="Liberation Sans,sans-serif" font-weight="bold" font-size="8.4" fill="#fff" stroke="#111" stroke-width="1.6" paint-order="stroke" stroke-linejoin="round" textLength="12" lengthAdjust="spacingAndGlyphs">PSD</text><path d="M779.5 91L788.7 79.7L796.1 79.7L791 94.7Z" fill="#050505"/><ellipse cx="792.4" cy="81.4" rx="1.9" ry="1.2" fill="#fff" transform="rotate(-18 792.4 81.4)"/><ellipse cx="787.4" cy="84" rx="1.9" ry="1.2" fill="#fff" transform="rotate(-18 787.4 84)"/><ellipse cx="789.8" cy="88.4" rx="1.9" ry="1.2" fill="#fff" transform="rotate(-18 789.8 88.4)"/><ellipse cx="783.8" cy="90.6" rx="1.9" ry="1.2" fill="#fff" transform="rotate(-18 783.8 90.6)"/><path d="M781.4 86.4C778.6 82 781.6 78.4 785.6 78.2" fill="none" stroke="#123a16" stroke-width="3.6" opacity="0.55"/><path d="M785 75.6L789.4 79L785.4 81.4Z" fill="#123a16" stroke="#123a16" stroke-width="1" opacity="0.55"/><path d="M781.4 86.4C778.6 82 781.6 78.4 785.6 78.2" fill="none" stroke="#2fae3c" stroke-width="2.8"/><path d="M785 75.6L789.4 79L785.4 81.4Z" fill="#2fae3c" stroke="#2fae3c" stroke-width="0.6" stroke-linejoin="round"/><path d="M796.4 84.2C799.4 88.6 797 92.6 793.4 93.4" fill="none" stroke="#123a16" stroke-width="3.6" opacity="0.55"/><path d="M794 90.2L789 93.4L794.6 96Z" fill="#123a16" stroke="#123a16" stroke-width="1" opacity="0.55"/><path d="M796.4 84.2C799.4 88.6 797 92.6 793.4 93.4" fill="none" stroke="#2fae3c" stroke-width="2.8"/><path d="M794 90.2L789 93.4L794.6 96Z" fill="#2fae3c" stroke="#2fae3c" stroke-width="0.6" stroke-linejoin="round"/><rect x="805" y="76" width="4" height="4" fill="#000"/><rect x="809" y="76" width="4" height="4" fill="#fff"/><rect x="805" y="80" width="4" height="4" fill="#fff"/><rect x="809" y="80" width="4" height="4" fill="#000"/><defs><pattern id="ckp" x="0.4" y="0.2" width="3.2" height="3.2" patternUnits="userSpaceOnUse"><rect width="1.6" height="1.6" fill="#000" opacity="0.85"/><rect x="1.6" y="1.6" width="1.6" height="1.6" fill="#000" opacity="0.85"/></pattern></defs><path d="M813 80.5C813.5 78 816 77 819 77C822.5 77 825 78.6 825 82V85.5H813.2Z" fill="#2030c8"/><path d="M814.5 84C816.5 82.4 821.5 82.4 823.6 84.4C824 88 823 91 821.6 93V96H816.4V93C815 91 814 88 814.5 84Z" fill="#f2c0a4"/><path d="M813 80.5C813.5 78 816 77 819 77C822.5 77 825 78.6 825 82V85.5L823.6 84.4C824 88 823 91 821.6 93V96H816.4V93C815 91 814 88 814.5 84L813.2 85.5Z" fill="url(#ckp)"/><path d="M845 73.9H851L854 76.9V86.2H845Z" fill="#f6f6f6" stroke="#1e1e1e" stroke-width="1" stroke-linejoin="round"/><path d="M851 73.9V76.9H854" fill="#ccc" stroke="#333" stroke-width="0.5"/><rect x="846.8" y="77.10000000000001" width="3.4000000000000004" height="0.9" fill="#555"/><rect x="846.8" y="79.10000000000001" width="5.6" height="0.9" fill="#555"/><rect x="846.8" y="81.10000000000001" width="5.6" height="0.9" fill="#555"/><rect x="846.8" y="83.10000000000001" width="5.6" height="0.9" fill="#555"/><path d="M853.1 80.2H859.1L862.1 83.2V92.10000000000001H853.1Z" fill="#f6f6f6" stroke="#1e1e1e" stroke-width="1" stroke-linejoin="round"/><path d="M859.1 80.2V83.2H862.1" fill="#ccc" stroke="#333" stroke-width="0.5"/><rect x="854.9" y="83.4" width="3.4000000000000004" height="0.9" fill="#555"/><rect x="854.9" y="85.4" width="5.6" height="0.9" fill="#555"/><rect x="854.9" y="87.4" width="5.6" height="0.9" fill="#555"/><rect x="872.2" y="75.6" width="12" height="14.6" rx="1" fill="#c99c6c" stroke="#2a1c10" stroke-width="1"/><path d="M874.4 77.2L875.6 74H880.8L882 77.2Z" fill="#e8e8e8" stroke="#333" stroke-width="0.7"/><path d="M880.4 81.2H885.1999999999999L888.1999999999999 84.2V92.0H880.4Z" fill="#f6f6f6" stroke="#1e1e1e" stroke-width="1" stroke-linejoin="round"/><path d="M885.1999999999999 81.2V84.2H888.1999999999999" fill="#ccc" stroke="#333" stroke-width="0.5"/><rect x="882.1999999999999" y="84.4" width="2.2" height="0.9" fill="#555"/><rect x="882.1999999999999" y="86.4" width="4.4" height="0.9" fill="#555"/><rect x="882.1999999999999" y="88.4" width="4.4" height="0.9" fill="#555"/><path d="M901.4 77C903 75.4 905 74.4 906.9 73.6C908.8 74.4 911 75.4 912.6 77V90.6C912.6 91.4 912 92 911.2 92H902.8C902 92 901.4 91.4 901.4 90.6Z" fill="#616161"/><rect x="906.4" y="73" width="1.1" height="20" fill="#6a6a6a"/><path d="M927.8 78.4C927.8 77.4 928.6 76.6 929.6 76.6H930.4C930.6 75.4 931.4 74.6 932.6 74.6H935.4C936.6 74.6 937.4 75.4 937.6 76.6H938.4C939.4 76.6 940.2 77.4 940.2 78.4V91.8H927.8Z" fill="#616161"/><rect x="924" y="83.3" width="20" height="1.5" fill="#646464"/><path d="M953 58C950.6 54 953 51 957 50.6" fill="none" stroke="#123a16" stroke-width="3.6" opacity="0.55"/><path d="M956.6 47.6L961.6 50.6L957 53.6Z" fill="#123a16" stroke="#123a16" stroke-width="1" opacity="0.55"/><path d="M953 58C950.6 54 953 51 957 50.6" fill="none" stroke="#2fae3c" stroke-width="2.8"/><path d="M956.6 47.6L961.6 50.6L957 53.6Z" fill="#2fae3c" stroke="#2fae3c" stroke-width="0.6" stroke-linejoin="round"/><path d="M969 54.6C971.6 59 968.6 62.4 965.4 63" fill="none" stroke="#123a16" stroke-width="3.6" opacity="0.55"/><path d="M966 60L960.8 63.6L966.4 66.2Z" fill="#123a16" stroke="#123a16" stroke-width="1" opacity="0.55"/><path d="M969 54.6C971.6 59 968.6 62.4 965.4 63" fill="none" stroke="#2fae3c" stroke-width="2.8"/><path d="M966 60L960.8 63.6L966.4 66.2Z" fill="#2fae3c" stroke="#2fae3c" stroke-width="0.6" stroke-linejoin="round"/><text x="954.4" y="59.8" font-family="Liberation Sans,sans-serif" font-weight="bold" font-size="8" fill="#fff" stroke="#111" stroke-width="1.6" paint-order="stroke" stroke-linejoin="round" textLength="11.8" lengthAdjust="spacingAndGlyphs">0.0</text><path d="M978 66.4L996.8 47.3" stroke="#0e0e0e" stroke-width="0.85"/><path d="M978.5 66.9L997.3 47.8" stroke="#777" stroke-width="0.5"/><text x="977.6" y="54" font-family="Liberation Sans,sans-serif" font-weight="bold" font-size="8" fill="#fff" stroke="#111" stroke-width="1.6" paint-order="stroke" stroke-linejoin="round" textLength="11.8" lengthAdjust="spacingAndGlyphs">0.0</text><path d="M989 59.6A4 4 0 1 1 994.6 64.4" fill="none" stroke="#d3222a" stroke-width="2"/><path d="M995.4 61.4L989 65L995.8 67.2Z" fill="#d3222a"/><rect x="951.8" y="73.9" width="8" height="7.8" rx="0.8" fill="#2b5d88" stroke="#6bb0e4" stroke-width="1.1"/><rect x="954.30" y="76.40" width="3.6" height="3.6" fill="#1a1a1a" opacity="0.8"/><rect x="953.90" y="76.00" width="3.4" height="3.4" fill="#f4e850"/><rect x="955.05" y="77.15" width="1.1" height="1.1" fill="#1a1a1a"/><path d="M950.9 91.8L970 73" stroke="#0e0e0e" stroke-width="0.85"/><path d="M951.4 92.3L970.5 73.5" stroke="#777" stroke-width="0.5"/><path d="M962.2 84.4L969.2 84.4" stroke="#1c1c1c" stroke-width="1.6" opacity="0.8"/><path d="M961.5 83.7L968.5 83.7" stroke="#6bb0e4" stroke-width="1.2"/><path d="M962.2 91.2L969.2 91.2" stroke="#1c1c1c" stroke-width="1.6" opacity="0.8"/><path d="M961.5 90.5L968.5 90.5" stroke="#6bb0e4" stroke-width="1.2"/><path d="M962.2 84.4L962.2 91.2" stroke="#1c1c1c" stroke-width="1.6" opacity="0.8"/><path d="M961.5 83.7L961.5 90.5" stroke="#6bb0e4" stroke-width="1.2"/><path d="M969.2 84.4L969.2 91.2" stroke="#1c1c1c" stroke-width="1.6" opacity="0.8"/><path d="M968.5 83.7L968.5 90.5" stroke="#6bb0e4" stroke-width="1.2"/><rect x="960.20" y="82.40" width="3.6" height="3.6" fill="#1a1a1a" opacity="0.8"/><rect x="959.80" y="82.00" width="3.4" height="3.4" fill="#f4e850"/><rect x="960.95" y="83.15" width="1.1" height="1.1" fill="#1a1a1a"/><rect x="967.20" y="82.40" width="3.6" height="3.6" fill="#1a1a1a" opacity="0.8"/><rect x="966.80" y="82.00" width="3.4" height="3.4" fill="#f4e850"/><rect x="967.95" y="83.15" width="1.1" height="1.1" fill="#1a1a1a"/><rect x="960.20" y="89.20" width="3.6" height="3.6" fill="#1a1a1a" opacity="0.8"/><rect x="959.80" y="88.80" width="3.4" height="3.4" fill="#f4e850"/><rect x="960.95" y="89.95" width="1.1" height="1.1" fill="#1a1a1a"/><rect x="967.20" y="89.20" width="3.6" height="3.6" fill="#1a1a1a" opacity="0.8"/><rect x="966.80" y="88.80" width="3.4" height="3.4" fill="#f4e850"/><rect x="967.95" y="89.95" width="1.1" height="1.1" fill="#1a1a1a"/><path d="M982.4 86.4A7.3 7.3 0 1 1 995 88" fill="none" stroke="#d3222a" stroke-width="2.1" stroke-linecap="round"/><path d="M993.6 86.2L985 90.2L992.6 94Z" fill="#d3222a"/><path d="M987.2 81.10000000000001L992.2 81.10000000000001" stroke="#1c1c1c" stroke-width="1.6" opacity="0.8"/><path d="M986.5 80.4L991.5 80.4" stroke="#6bb0e4" stroke-width="1.2"/><path d="M987.2 86.2L992.2 86.2" stroke="#1c1c1c" stroke-width="1.6" opacity="0.8"/><path d="M986.5 85.5L991.5 85.5" stroke="#6bb0e4" stroke-width="1.2"/><path d="M987.2 81.10000000000001L987.2 86.2" stroke="#1c1c1c" stroke-width="1.6" opacity="0.8"/><path d="M986.5 80.4L986.5 85.5" stroke="#6bb0e4" stroke-width="1.2"/><path d="M992.2 81.10000000000001L992.2 86.2" stroke="#1c1c1c" stroke-width="1.6" opacity="0.8"/><path d="M991.5 80.4L991.5 85.5" stroke="#6bb0e4" stroke-width="1.2"/><rect x="985.50" y="79.40" width="3.0" height="3.0" fill="#1a1a1a" opacity="0.8"/><rect x="985.10" y="79.00" width="2.8" height="2.8" fill="#f4e850"/><rect x="985.95" y="79.85" width="1.1" height="1.1" fill="#1a1a1a"/><rect x="990.50" y="79.40" width="3.0" height="3.0" fill="#1a1a1a" opacity="0.8"/><rect x="990.10" y="79.00" width="2.8" height="2.8" fill="#f4e850"/><rect x="990.95" y="79.85" width="1.1" height="1.1" fill="#1a1a1a"/><rect x="985.50" y="84.50" width="3.0" height="3.0" fill="#1a1a1a" opacity="0.8"/><rect x="985.10" y="84.10" width="2.8" height="2.8" fill="#f4e850"/><rect x="985.95" y="84.95" width="1.1" height="1.1" fill="#1a1a1a"/><rect x="990.50" y="84.50" width="3.0" height="3.0" fill="#1a1a1a" opacity="0.8"/><rect x="990.10" y="84.10" width="2.8" height="2.8" fill="#f4e850"/><rect x="990.95" y="84.95" width="1.1" height="1.1" fill="#1a1a1a"/><path d="M1044.2 58L1048.8 52.4L1053.4 58" fill="none" stroke="#d9262e" stroke-width="2.2"/><path d="M1044.2 91.6L1048.8 97.2L1053.4 91.6" fill="none" stroke="#d9262e" stroke-width="2.2"/><path d="M1026 70.4L1020.6 75L1026 79.6" fill="none" stroke="#d9262e" stroke-width="2.2"/><path d="M1071.8 70.4L1077.2 75L1071.8 79.6" fill="none" stroke="#d9262e" stroke-width="2.2"/></svg><div class="fld tf" style="left:840px;top:47px;width:53px;height:20px;line-height:20.5px;padding-left:4px">0.000</div><div class="fld tf" style="left:894px;top:47px;width:53px;height:20px;line-height:20.5px;padding-left:4px">0.000</div><div class="fld tf" style="left:1034px;top:66px;width:30px;height:18px;line-height:17px;padding-left:2px;letter-spacing:0.2px">0.10</div><svg style="left:168px;top:343px" width="5" height="318" viewBox="168 343 5 318"><defs><pattern id="spd" x="168" y="344" width="5" height="5" patternUnits="userSpaceOnUse"><rect x="1.2" y="0.3" width="1.6" height="1.6" fill="#303030"/><rect x="2.1" y="1.2" width="1.7" height="1.7" fill="#646464"/></pattern></defs><rect x="168" y="344" width="5" height="315" fill="url(#spd)"/></svg><div class="abs" id="vp" style="left:174px;top:106px;width:1104px;height:876px;background:#a2a2a2;overflow:hidden"><svg style="left:0;top:0" width="1104" height="876" viewBox="174 106 1104 876"><g font-family="Liberation Sans,sans-serif" font-weight="bold" font-size="11" fill="#787878" stroke="#787878" stroke-width="0.35"><text x="174.6" y="903">-0.1</text><text x="248.6" y="903">0</text><text x="322.6" y="903">0.1</text><text x="396.6" y="903">0.2</text><text x="470.6" y="903">0.3</text><text x="544.6" y="903">0.4</text><text x="617.6" y="903">0.5</text><text x="691.6" y="903">0.6</text><text x="765.6" y="903">0.7</text><text x="839.6" y="903">0.8</text><text x="913.6" y="903">0.9</text><text x="987.6" y="903">1</text><text x="248.6" y="976">-0.1</text><text x="248.6" y="828">0.1</text><text x="248.6" y="754">0.2</text><text x="248.6" y="680">0.3</text><text x="248.6" y="606">0.4</text><text x="248.6" y="533">0.5</text><text x="248.6" y="459">0.6</text><text x="248.6" y="385">0.7</text><text x="248.6" y="311">0.8</text><text x="248.6" y="237">0.9</text><text x="248.6" y="163">1</text></g><g shape-rendering="crispEdges"><rect x="175" y="166" width="1" height="820" fill="#838383"/><rect x="323" y="166" width="1" height="820" fill="#838383"/><rect x="397" y="166" width="1" height="820" fill="#838383"/><rect x="471" y="166" width="1" height="820" fill="#838383"/><rect x="545" y="166" width="1" height="820" fill="#838383"/><rect x="618" y="166" width="1" height="820" fill="#838383"/><rect x="692" y="166" width="1" height="820" fill="#838383"/><rect x="766" y="166" width="1" height="820" fill="#838383"/><rect x="840" y="166" width="1" height="820" fill="#838383"/><rect x="914" y="166" width="1" height="820" fill="#838383"/><rect x="174" y="979" width="815" height="1" fill="#838383"/><rect x="174" y="831" width="815" height="1" fill="#838383"/><rect x="174" y="757" width="815" height="1" fill="#838383"/><rect x="174" y="683" width="815" height="1" fill="#838383"/><rect x="174" y="609" width="815" height="1" fill="#838383"/><rect x="174" y="536" width="815" height="1" fill="#838383"/><rect x="174" y="462" width="815" height="1" fill="#838383"/><rect x="174" y="388" width="815" height="1" fill="#838383"/><rect x="174" y="314" width="815" height="1" fill="#838383"/><rect x="174" y="240" width="815" height="1" fill="#838383"/><rect x="174" y="166" width="815" height="1" fill="#444"/><rect x="988" y="166" width="1" height="820" fill="#444"/><rect x="174" y="905" width="815" height="1" fill="#0000ff"/><rect x="249" y="166" width="1" height="820" fill="#0000ff"/><rect x="249" y="905" width="370" height="1" fill="#ff0000"/><rect x="249" y="536" width="1" height="370" fill="#00ff00"/></g></svg></div></body></html>
